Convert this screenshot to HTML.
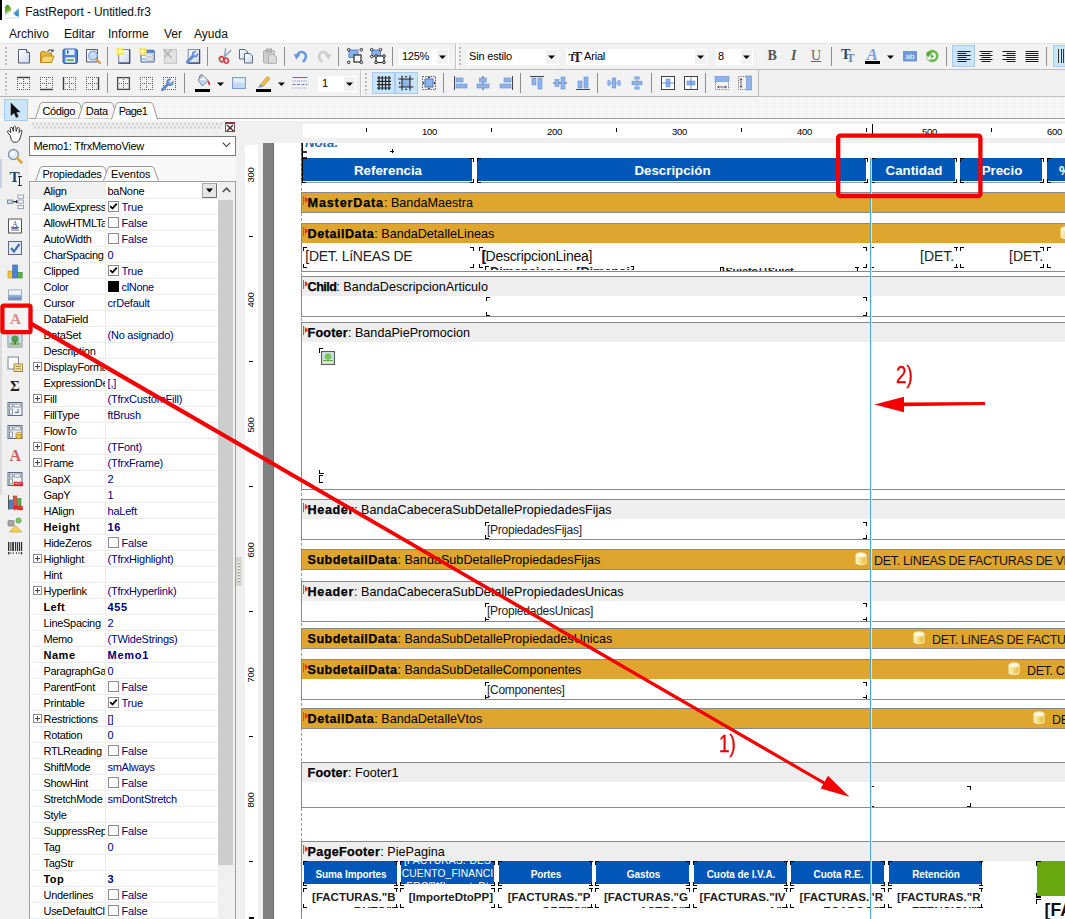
<!DOCTYPE html><html><head><meta charset="utf-8"><title>FastReport</title><style>
html,body{margin:0;padding:0;}
html{overflow:hidden;width:1065px;height:919px;}
body{width:1065px;height:919px;overflow:hidden;background:#f0f0f0;position:relative;font-family:"Liberation Sans",sans-serif;font-size:11px;color:#000;}
div{position:absolute;box-sizing:border-box;}
.t{white-space:nowrap;line-height:1;}
svg{position:absolute;overflow:visible;}
.gold{background:#dea62f;border:1px solid #8a8a8a;}
.ghead{background:#eeeeee;}
.band{border:1px solid #8a8a8a;background:#fff;}
.bt{white-space:nowrap;line-height:1;font-size:12.6px;}
.blue{background:#0057b7;color:#fff;font-weight:bold;text-align:center;white-space:nowrap;overflow:hidden;}
.pn{white-space:nowrap;line-height:1;font-size:11px;color:#000;}
.pv{white-space:nowrap;line-height:1;font-size:11px;color:#000080;}
.cb{width:11px;height:11px;border:1px solid #8a8a8a;background:#fff;}
</style></head><body><div id="root" style="left:0;top:0;width:1065px;height:919px;overflow:hidden;">
<div style="left:0px;top:0px;width:1065px;height:43px;background:#fff;"></div>
<div style="left:0px;top:0px;width:2px;height:20px;background:#000;"></div>
<svg style="left:4px;top:4px" width="16" height="15" viewBox="0 0 16 15"><defs><linearGradient id="lg1" x1="0" y1="0" x2="0.3" y2="1"><stop offset="0" stop-color="#3f8f12"/><stop offset=".55" stop-color="#6cb02a"/><stop offset="1" stop-color="#e8f2dc"/></linearGradient><linearGradient id="lg2" x1="1" y1="1" x2="0" y2="0.2"><stop offset="0" stop-color="#2a84c8"/><stop offset=".7" stop-color="#4a9cd8"/><stop offset="1" stop-color="#d8eaf6"/></linearGradient></defs><path d="M1 11.5 L1 3 Q2.5 0 4.5 1 Q7 3 7.6 6.5 Q5 7.5 3.5 9.5 Q2 11 1 11.5 Z" fill="url(#lg1)"/><path d="M9.2 9.3 L14.8 4.6 L14.8 12.8 Q11.5 12.6 9.2 9.3 Z" fill="url(#lg2)"/><path d="M0.5 14 L15 14" stroke="#d8dce4" stroke-width="1"/></svg>
<div class="t" style="left:25.3px;top:6.4px;font-size:12px;color:#111;letter-spacing:-0.101px;">FastReport - Untitled.fr3</div>
<div class="t" style="left:9px;top:27.5px;font-size:12px;color:#111;">Archivo</div>
<div class="t" style="left:64px;top:27.5px;font-size:12px;color:#111;">Editar</div>
<div class="t" style="left:108px;top:27.5px;font-size:12px;color:#111;">Informe</div>
<div class="t" style="left:164px;top:27.5px;font-size:12px;color:#111;">Ver</div>
<div class="t" style="left:194px;top:27.5px;font-size:12px;color:#111;">Ayuda</div>
<div style="left:0px;top:43px;width:1065px;height:1px;background:#e2e2e2;"></div>
<div style="left:0px;top:68.5px;width:1065px;height:1px;background:#bdbdbd;"></div>
<div style="left:0px;top:70px;width:758px;height:1px;background:#fff;"></div>
<div style="left:0px;top:96px;width:758px;height:1px;background:#b9b9b9;"></div>
<div style="left:757px;top:70px;width:1px;height:27px;background:#c8c8c8;"></div>
<div style="left:29px;top:97px;width:1036px;height:22px;background-color:#f9f9f9;background-image:radial-gradient(circle at 0.5px 0.5px,#ececec 0.6px,transparent 0.8px);background-size:2px 2px;"></div>
<div style="left:29px;top:118px;width:1036px;height:1px;background:#a0a0a0;"></div>
<div style="left:0px;top:119px;width:1065px;height:2px;background:#fcfcfc;"></div>
<div style="left:0px;top:44px;width:1065px;height:25px;background:#f2f2f2;"></div>
<div style="left:0px;top:70px;width:758px;height:26px;background:#f2f2f2;"></div>
<div style="left:5px;top:47px;width:3px;height:20px;background-image:radial-gradient(circle at 1px 1px,#bcbcbc 0.8px,transparent 1.1px);background-size:3px 4px;"></div>
<div style="left:5px;top:73px;width:3px;height:21px;background-image:radial-gradient(circle at 1px 1px,#bcbcbc 0.8px,transparent 1.1px);background-size:3px 4px;"></div>
<svg style="left:15.5px;top:48.0px" width="16" height="16" viewBox="0 0 16 16"><defs><linearGradient id="pg" x1="0" y1="0" x2="1" y2="1"><stop offset="0" stop-color="#ffffff"/><stop offset="1" stop-color="#cdd6ea"/></linearGradient></defs><path d="M2.5 1.5 L10.5 1.5 L13.5 4.5 L13.5 15 L2.5 15 Z" fill="url(#pg)" stroke="#4d5a78" stroke-width="1"/><path d="M10.5 1.5 L10.5 4.5 L13.5 4.5" fill="#fff" stroke="#4d5a78" stroke-width="1"/></svg>
<svg style="left:38.5px;top:48.0px" width="16" height="16" viewBox="0 0 16 16"><path d="M1.5 5 L1.5 14.5 L12.5 14.5 L12.5 5 L7 5 L6 3.5 L2.5 3.5 Z" fill="#f0b83a" stroke="#b98218"/><path d="M1.5 14.5 L4 8 L15 8 L12.5 14.5 Z" fill="#fbd66c" stroke="#c18a1e"/><path d="M8.5 3.5 Q11 0.5 14 3" fill="none" stroke="#555" stroke-width="1.2"/><path d="M14.8 1 L14.5 4 L11.8 3.4 Z" fill="#555"/></svg>
<svg style="left:62.0px;top:48.0px" width="16" height="16" viewBox="0 0 16 16"><rect x="1" y="1" width="14.5" height="14.5" rx="2" fill="#4f86d6" stroke="#2c5aa6"/><rect x="3.5" y="1.5" width="9" height="5.5" fill="#e6eefb"/><rect x="5" y="2.3" width="1.5" height="3.3" fill="#35508a"/><rect x="3.5" y="9.5" width="9.5" height="5" fill="#f5f8fc"/><rect x="4.5" y="11" width="7.5" height="2.2" fill="#76b85a"/></svg>
<svg style="left:85.0px;top:48.0px" width="16" height="16" viewBox="0 0 16 16"><defs><linearGradient id="pg" x1="0" y1="0" x2="1" y2="1"><stop offset="0" stop-color="#ffffff"/><stop offset="1" stop-color="#cdd6ea"/></linearGradient></defs><path d="M1.5 1.5 L12.5 1.5 L12.5 14 L1.5 14 Z" fill="url(#pg)" stroke="#4d5a78"/><circle cx="8" cy="7.5" r="4.3" fill="#c4dbf4" fill-opacity=".9" stroke="#7fa4d4" stroke-width="1.2"/><path d="M11.2 11 L15 15" stroke="#d79a4a" stroke-width="2.2" stroke-linecap="round"/></svg>
<div style="left:107px;top:47px;width:1px;height:19px;background:#8e8e8e;"></div>
<svg style="left:115.5px;top:48.0px" width="16" height="16" viewBox="0 0 16 16"><defs><linearGradient id="pg" x1="0" y1="0" x2="1" y2="1"><stop offset="0" stop-color="#ffffff"/><stop offset="1" stop-color="#cdd6ea"/></linearGradient></defs><rect x="2.7" y="1.5" width="11" height="13.6" fill="url(#pg)" stroke="#7a86a4" stroke-width="1"/><path d="M2.7 15.1 L13.7 15.1 L13.7 1.5" fill="none" stroke="#3a4662" stroke-width="1.2"/><g transform="translate(0.3,-0.3)"><rect x="0.3" y="0.3" width="6.8" height="6.8" fill="#f7dc3a"/><path d="M3.7 0 L3.7 7.4 M0 3.7 L7.4 3.7" stroke="#fffbd0" stroke-width="1.1"/><path d="M0.6 0.6 L6.8 6.8 M6.8 0.6 L0.6 6.8" stroke="#fff3a0" stroke-width=".8"/><rect x="2.9" y="2.9" width="1.6" height="1.6" fill="#ffffff"/></g></svg>
<svg style="left:139.0px;top:48.0px" width="16" height="16" viewBox="0 0 16 16"><rect x="2" y="2.4" width="13.2" height="11.6" rx="1" fill="#f4f7fc" stroke="#3f62a8" stroke-width="1.1"/><rect x="2" y="2.4" width="13.2" height="2.6" fill="#5a88d4"/><rect x="3.6" y="6.6" width="2.4" height="1" fill="#4a78c8"/><rect x="7" y="6" width="6.4" height="2.2" fill="#eceef2" stroke="#9aa2b4" stroke-width=".6"/><rect x="3.6" y="10.6" width="2.4" height="1" fill="#4a78c8"/><rect x="7" y="10" width="6.4" height="2.2" fill="#eceef2" stroke="#9aa2b4" stroke-width=".6"/><g transform="translate(0.2,-0.3)"><rect x="0.3" y="0.3" width="6.8" height="6.8" fill="#f7dc3a"/><path d="M3.7 0 L3.7 7.4 M0 3.7 L7.4 3.7" stroke="#fffbd0" stroke-width="1.1"/><path d="M0.6 0.6 L6.8 6.8 M6.8 0.6 L0.6 6.8" stroke="#fff3a0" stroke-width=".8"/><rect x="2.9" y="2.9" width="1.6" height="1.6" fill="#ffffff"/></g></svg>
<svg style="left:162.0px;top:48.0px" width="16" height="16" viewBox="0 0 16 16"><rect x="2.4" y="1.5" width="12" height="13.8" fill="#e2e2e2" stroke="#c4c4c4"/><path d="M1.5 1 L9.5 10 M9.5 1.5 L3 9" stroke="#b0b0b0" stroke-width="1.3"/></svg>
<svg style="left:184.5px;top:48.0px" width="16" height="16" viewBox="0 0 16 16"><defs><linearGradient id="pg" x1="0" y1="0" x2="1" y2="1"><stop offset="0" stop-color="#ffffff"/><stop offset="1" stop-color="#cdd6ea"/></linearGradient></defs><rect x="3.2" y="1.5" width="11.4" height="13.6" fill="url(#pg)" stroke="#7a86a4"/><path d="M3.2 15.1 L14.6 15.1 L14.6 1.5" fill="none" stroke="#3a4662" stroke-width="1.2"/><path d="M2.2 14 L8.5 7.6" stroke="#5f8ed8" stroke-width="3" stroke-linecap="round"/><circle cx="10" cy="6.2" r="2.9" fill="#86aee4" stroke="#5580c4" stroke-width=".8"/><path d="M10 6.2 L12.8 3.6" stroke="#e8ecf6" stroke-width="2"/></svg>
<div style="left:207px;top:47px;width:1px;height:19px;background:#8e8e8e;"></div>
<svg style="left:216.0px;top:48.0px" width="16" height="16" viewBox="0 0 16 16"><path d="M9.6 0.8 L8.2 9.5 M14.6 2.6 L7.6 9.6" stroke="#8fa6c4" stroke-width="1.5" stroke-linecap="round"/><ellipse cx="5.6" cy="11.2" rx="2.1" ry="2.6" transform="rotate(-20 5.6 11.2)" fill="none" stroke="#d63a3a" stroke-width="1.6"/><ellipse cx="10.2" cy="12.6" rx="2.1" ry="2.6" transform="rotate(-20 10.2 12.6)" fill="none" stroke="#d63a3a" stroke-width="1.6"/></svg>
<svg style="left:238.0px;top:48.0px" width="16" height="16" viewBox="0 0 16 16"><defs><linearGradient id="pg" x1="0" y1="0" x2="1" y2="1"><stop offset="0" stop-color="#ffffff"/><stop offset="1" stop-color="#cdd6ea"/></linearGradient></defs><path d="M1.5 1.5 L7 1.5 L9.5 4 L9.5 11 L1.5 11 Z" fill="url(#pg)" stroke="#5a6a8c"/><path d="M6.5 5.5 L12 5.5 L14.5 8 L14.5 15 L6.5 15 Z" fill="url(#pg)" stroke="#5a6a8c"/></svg>
<svg style="left:261.5px;top:48.0px" width="16" height="16" viewBox="0 0 16 16"><rect x="1.5" y="2.5" width="11" height="12.5" rx="1" fill="#cfcfcf" stroke="#adadad"/><rect x="4.5" y="1" width="5" height="3" fill="#c0c0c0" stroke="#a8a8a8"/><path d="M6.5 6.5 L12 6.5 L14.5 9 L14.5 15.3 L6.5 15.3 Z" fill="#dcdcdc" stroke="#b0b0b0"/></svg>
<div style="left:284px;top:47px;width:1px;height:19px;background:#8e8e8e;"></div>
<svg style="left:292.5px;top:48.0px" width="16" height="16" viewBox="0 0 16 16"><path d="M4 9 Q5 3 10 4.2 Q14.5 6 12 11.5 L10 14" fill="none" stroke="#6a98e0" stroke-width="2.6"/><path d="M0.8 6 L7.5 6.6 L3.2 11.5 Z" fill="#6a98e0"/></svg>
<svg style="left:316.0px;top:48.0px" width="16" height="16" viewBox="0 0 16 16"><path d="M12 9 Q11 3 6 4.2 Q1.5 6 4 11.5 L6 14" fill="none" stroke="#cdcdcd" stroke-width="2.6"/><path d="M15.2 6 L8.5 6.6 L12.8 11.5 Z" fill="#cdcdcd"/></svg>
<div style="left:338px;top:47px;width:1px;height:19px;background:#8e8e8e;"></div>
<svg style="left:347.0px;top:48.0px" width="16" height="16" viewBox="0 0 16 16"><rect x="2" y="2" width="9" height="7.5" fill="#8ab0ea" stroke="#5a84cc"/><rect x="7" y="7" width="7" height="7" fill="#fff" stroke="#2a2a2a" stroke-width="1.2"/><circle cx="1.7" cy="1.7" r="1.3" fill="#fff" stroke="#222" stroke-width="1"/><circle cx="14.3" cy="1.7" r="1.3" fill="#fff" stroke="#222" stroke-width="1"/><circle cx="1.7" cy="14.3" r="1.3" fill="#fff" stroke="#222" stroke-width="1"/><circle cx="14.3" cy="14.3" r="1.3" fill="#fff" stroke="#222" stroke-width="1"/></svg>
<svg style="left:370.0px;top:48.0px" width="16" height="16" viewBox="0 0 16 16"><rect x="2" y="2" width="8.5" height="6.5" fill="#8ab0ea" stroke="#5a84cc"/><rect x="6" y="8" width="8" height="6.5" fill="#fff" stroke="#2a2a2a" stroke-width="1.2"/><circle cx="1.7" cy="1.7" r="1.3" fill="#fff" stroke="#222" stroke-width="1"/><circle cx="10.5" cy="1.7" r="1.3" fill="#fff" stroke="#222" stroke-width="1"/><circle cx="1.7" cy="8.5" r="1.3" fill="#fff" stroke="#222" stroke-width="1"/><circle cx="6" cy="8" r="1.3" fill="#fff" stroke="#222" stroke-width="1"/><circle cx="14" cy="8" r="1.3" fill="#fff" stroke="#222" stroke-width="1"/><circle cx="6" cy="14.3" r="1.3" fill="#fff" stroke="#222" stroke-width="1"/><circle cx="14" cy="14.3" r="1.3" fill="#fff" stroke="#222" stroke-width="1"/></svg>
<div style="left:392px;top:47px;width:1px;height:19px;background:#8e8e8e;"></div>
<div style="left:399px;top:48.5px;width:50px;height:16.0px;background:#fff;"></div>
<div style="left:437px;top:49.5px;width:11px;height:14.0px;background:#f1f1f1;"></div>
<div class="t" style="left:402px;top:51.0px;font-size:11px;letter-spacing:-0.281px;">125%</div>
<svg style="left:439.0px;top:55.0px" width="7" height="4" viewBox="0 0 7 4"><path d="M0 0.5 L7 0.5 L3.5 4 Z" fill="#000"/></svg>
<div style="left:455px;top:44px;width:1px;height:25px;background:#c4c4c4;"></div>
<div style="left:456px;top:44px;width:1px;height:25px;background:#fff;"></div>
<div style="left:459px;top:47px;width:3px;height:20px;background-image:radial-gradient(circle at 1px 1px,#bcbcbc 0.8px,transparent 1.1px);background-size:3px 4px;"></div>
<div style="left:467px;top:48.5px;width:91px;height:16.0px;background:#fff;"></div>
<div style="left:546px;top:49.5px;width:11px;height:14.0px;background:#f1f1f1;"></div>
<div class="t" style="left:469px;top:51.0px;font-size:11px;letter-spacing:-0.179px;">Sin estilo</div>
<svg style="left:548.0px;top:55.0px" width="7" height="4" viewBox="0 0 7 4"><path d="M0 0.5 L7 0.5 L3.5 4 Z" fill="#000"/></svg>
<div style="left:566px;top:48.5px;width:141px;height:16.0px;background:#fff;"></div>
<div style="left:695px;top:49.5px;width:11px;height:14.0px;background:#f1f1f1;"></div>
<div class="t" style="left:584px;top:51.0px;font-size:11px;letter-spacing:-0.176px;">Arial</div>
<svg style="left:697.0px;top:55.0px" width="7" height="4" viewBox="0 0 7 4"><path d="M0 0.5 L7 0.5 L3.5 4 Z" fill="#000"/></svg>
<div class="t" style="left:568.5px;top:49.5px;font-family:'Liberation Serif',serif;font-weight:bold;font-size:11px;color:#222;letter-spacing:-3px;">T<span style="font-size:14px;position:relative;top:1px;">T</span></div>
<div style="left:715.5px;top:48.5px;width:37.0px;height:16.0px;background:#fff;"></div>
<div style="left:740.5px;top:49.5px;width:11px;height:14.0px;background:#f1f1f1;"></div>
<div class="t" style="left:718px;top:51.0px;font-size:11px;letter-spacing:-0.245px;">8</div>
<svg style="left:742.5px;top:55.0px" width="7" height="4" viewBox="0 0 7 4"><path d="M0 0.5 L7 0.5 L3.5 4 Z" fill="#000"/></svg>
<div class="t" style="left:767.5px;top:49px;font-family:'Liberation Serif',serif;font-weight:bold;font-size:14px;color:#555;">B</div>
<div class="t" style="left:791px;top:49px;font-family:'Liberation Serif',serif;font-style:italic;font-weight:bold;font-size:14px;color:#555;">I</div>
<div class="t" style="left:811px;top:49px;font-family:'Liberation Serif',serif;font-size:14px;color:#666;text-decoration:underline;">U</div>
<div style="left:831px;top:47px;width:1px;height:19px;background:#8e8e8e;"></div>
<div class="t" style="left:841px;top:48px;font-family:'Liberation Serif',serif;font-weight:bold;font-size:14px;color:#2f4668;letter-spacing:-3.5px;">T<span style="font-size:11.5px;color:#6a86b0;position:relative;top:2.5px;">T</span></div>
<div class="t" style="left:866.5px;top:45.5px;font-family:'Liberation Serif',serif;font-style:italic;font-weight:bold;font-size:17px;color:#7aa0e0;">A</div>
<div style="left:865px;top:61px;width:15px;height:3px;background:#000;"></div>
<svg style="left:887.0px;top:55.0px" width="7" height="4" viewBox="0 0 7 4"><path d="M0 0.5 L7 0.5 L3.5 4 Z" fill="#000"/></svg>
<svg style="left:901.5px;top:48.0px" width="16" height="16" viewBox="0 0 16 16"><rect x="1" y="3" width="14" height="10.5" fill="#6f98dc"/><text x="8" y="11.2" font-family="Liberation Sans" font-size="8" fill="#fff" text-anchor="middle">ab</text></svg>
<svg style="left:924.0px;top:48.0px" width="16" height="16" viewBox="0 0 16 16"><circle cx="8.3" cy="8" r="4.9" fill="none" stroke="#6cbc4c" stroke-width="2.6"/><path d="M2 8.5 L6.5 8.5 L5.5 13 Z" fill="#f2f2f2"/><path d="M2.2 4 L8.6 4.4 L4.4 9 Z" fill="#5aaa3a"/><path d="M7 10.2 L10 8.2 L7 6.4 Z" fill="#4a9a2e"/></svg>
<div style="left:946px;top:47px;width:1px;height:19px;background:#8e8e8e;"></div>
<div style="left:952px;top:44.5px;width:23px;height:22.5px;background:#cce4f7;border:1px solid #a6cdf0;"></div>
<svg style="left:956.0px;top:48.0px" width="16" height="16" viewBox="0 0 16 16"><rect x="1.5" y="3" width="13" height="1" fill="#1a1a1a"/><rect x="1.5" y="5" width="9" height="1" fill="#1a1a1a"/><rect x="1.5" y="7" width="13" height="1" fill="#1a1a1a"/><rect x="1.5" y="9" width="9" height="1" fill="#1a1a1a"/><rect x="1.5" y="11" width="13" height="1" fill="#1a1a1a"/><rect x="1.5" y="13" width="9" height="1" fill="#1a1a1a"/></svg>
<svg style="left:978.0px;top:48.0px" width="16" height="16" viewBox="0 0 16 16"><rect x="1.5" y="3" width="13" height="1" fill="#1a1a1a"/><rect x="3.5" y="5" width="9" height="1" fill="#1a1a1a"/><rect x="1.5" y="7" width="13" height="1" fill="#1a1a1a"/><rect x="3.5" y="9" width="9" height="1" fill="#1a1a1a"/><rect x="1.5" y="11" width="13" height="1" fill="#1a1a1a"/><rect x="3.5" y="13" width="9" height="1" fill="#1a1a1a"/></svg>
<svg style="left:1001.0px;top:48.0px" width="16" height="16" viewBox="0 0 16 16"><rect x="1.5" y="3" width="13" height="1" fill="#1a1a1a"/><rect x="5.5" y="5" width="9" height="1" fill="#1a1a1a"/><rect x="1.5" y="7" width="13" height="1" fill="#1a1a1a"/><rect x="5.5" y="9" width="9" height="1" fill="#1a1a1a"/><rect x="1.5" y="11" width="13" height="1" fill="#1a1a1a"/><rect x="5.5" y="13" width="9" height="1" fill="#1a1a1a"/></svg>
<svg style="left:1024.0px;top:48.0px" width="16" height="16" viewBox="0 0 16 16"><rect x="1.5" y="3" width="13" height="1" fill="#1a1a1a"/><rect x="1.5" y="5" width="13" height="1" fill="#1a1a1a"/><rect x="1.5" y="7" width="13" height="1" fill="#1a1a1a"/><rect x="1.5" y="9" width="13" height="1" fill="#1a1a1a"/><rect x="1.5" y="11" width="13" height="1" fill="#1a1a1a"/><rect x="1.5" y="13" width="13" height="1" fill="#1a1a1a"/></svg>
<div style="left:1046px;top:47px;width:1px;height:19px;background:#8e8e8e;"></div>
<div style="left:1052.5px;top:44.5px;width:23px;height:22.5px;background:#cce4f7;border:1px solid #a6cdf0;"></div>
<div style="left:1058px;top:49px;width:1.2px;height:14px;background:#333;"></div>
<div style="left:1060.5px;top:49px;width:1.2px;height:14px;background:#333;"></div>
<div style="left:1063px;top:49px;width:1.2px;height:14px;background:#333;"></div>
<svg style="left:16.0px;top:76.0px" width="16" height="16" viewBox="0 0 16 16"><g fill="#5a5a5a"><rect x="1" y="1" width="1" height="1"/><rect x="1" y="3" width="1" height="1"/><rect x="1" y="5" width="1" height="1"/><rect x="1" y="7" width="1" height="1"/><rect x="1" y="9" width="1" height="1"/><rect x="1" y="11" width="1" height="1"/><rect x="1" y="13" width="1" height="1"/><rect x="3" y="1" width="1" height="1"/><rect x="3" y="7" width="1" height="1"/><rect x="3" y="13" width="1" height="1"/><rect x="5" y="1" width="1" height="1"/><rect x="5" y="7" width="1" height="1"/><rect x="5" y="13" width="1" height="1"/><rect x="7" y="1" width="1" height="1"/><rect x="7" y="3" width="1" height="1"/><rect x="7" y="5" width="1" height="1"/><rect x="7" y="7" width="1" height="1"/><rect x="7" y="9" width="1" height="1"/><rect x="7" y="11" width="1" height="1"/><rect x="7" y="13" width="1" height="1"/><rect x="9" y="1" width="1" height="1"/><rect x="9" y="7" width="1" height="1"/><rect x="9" y="13" width="1" height="1"/><rect x="11" y="1" width="1" height="1"/><rect x="11" y="7" width="1" height="1"/><rect x="11" y="13" width="1" height="1"/><rect x="13" y="1" width="1" height="1"/><rect x="13" y="3" width="1" height="1"/><rect x="13" y="5" width="1" height="1"/><rect x="13" y="7" width="1" height="1"/><rect x="13" y="9" width="1" height="1"/><rect x="13" y="11" width="1" height="1"/><rect x="13" y="13" width="1" height="1"/></g><g fill="#3c3c3c"><rect x="1" y="0.8" width="13" height="1.4"/></g></svg>
<svg style="left:39.0px;top:76.0px" width="16" height="16" viewBox="0 0 16 16"><g fill="#5a5a5a"><rect x="1" y="1" width="1" height="1"/><rect x="1" y="3" width="1" height="1"/><rect x="1" y="5" width="1" height="1"/><rect x="1" y="7" width="1" height="1"/><rect x="1" y="9" width="1" height="1"/><rect x="1" y="11" width="1" height="1"/><rect x="1" y="13" width="1" height="1"/><rect x="3" y="1" width="1" height="1"/><rect x="3" y="7" width="1" height="1"/><rect x="3" y="13" width="1" height="1"/><rect x="5" y="1" width="1" height="1"/><rect x="5" y="7" width="1" height="1"/><rect x="5" y="13" width="1" height="1"/><rect x="7" y="1" width="1" height="1"/><rect x="7" y="3" width="1" height="1"/><rect x="7" y="5" width="1" height="1"/><rect x="7" y="7" width="1" height="1"/><rect x="7" y="9" width="1" height="1"/><rect x="7" y="11" width="1" height="1"/><rect x="7" y="13" width="1" height="1"/><rect x="9" y="1" width="1" height="1"/><rect x="9" y="7" width="1" height="1"/><rect x="9" y="13" width="1" height="1"/><rect x="11" y="1" width="1" height="1"/><rect x="11" y="7" width="1" height="1"/><rect x="11" y="13" width="1" height="1"/><rect x="13" y="1" width="1" height="1"/><rect x="13" y="3" width="1" height="1"/><rect x="13" y="5" width="1" height="1"/><rect x="13" y="7" width="1" height="1"/><rect x="13" y="9" width="1" height="1"/><rect x="13" y="11" width="1" height="1"/><rect x="13" y="13" width="1" height="1"/></g><g fill="#3c3c3c"><rect x="1" y="12.8" width="13" height="1.4"/></g></svg>
<svg style="left:62.0px;top:76.0px" width="16" height="16" viewBox="0 0 16 16"><g fill="#5a5a5a"><rect x="1" y="1" width="1" height="1"/><rect x="1" y="3" width="1" height="1"/><rect x="1" y="5" width="1" height="1"/><rect x="1" y="7" width="1" height="1"/><rect x="1" y="9" width="1" height="1"/><rect x="1" y="11" width="1" height="1"/><rect x="1" y="13" width="1" height="1"/><rect x="3" y="1" width="1" height="1"/><rect x="3" y="7" width="1" height="1"/><rect x="3" y="13" width="1" height="1"/><rect x="5" y="1" width="1" height="1"/><rect x="5" y="7" width="1" height="1"/><rect x="5" y="13" width="1" height="1"/><rect x="7" y="1" width="1" height="1"/><rect x="7" y="3" width="1" height="1"/><rect x="7" y="5" width="1" height="1"/><rect x="7" y="7" width="1" height="1"/><rect x="7" y="9" width="1" height="1"/><rect x="7" y="11" width="1" height="1"/><rect x="7" y="13" width="1" height="1"/><rect x="9" y="1" width="1" height="1"/><rect x="9" y="7" width="1" height="1"/><rect x="9" y="13" width="1" height="1"/><rect x="11" y="1" width="1" height="1"/><rect x="11" y="7" width="1" height="1"/><rect x="11" y="13" width="1" height="1"/><rect x="13" y="1" width="1" height="1"/><rect x="13" y="3" width="1" height="1"/><rect x="13" y="5" width="1" height="1"/><rect x="13" y="7" width="1" height="1"/><rect x="13" y="9" width="1" height="1"/><rect x="13" y="11" width="1" height="1"/><rect x="13" y="13" width="1" height="1"/></g><g fill="#3c3c3c"><rect x="0.8" y="1" width="1.4" height="13"/></g></svg>
<svg style="left:85.0px;top:76.0px" width="16" height="16" viewBox="0 0 16 16"><g fill="#5a5a5a"><rect x="1" y="1" width="1" height="1"/><rect x="1" y="3" width="1" height="1"/><rect x="1" y="5" width="1" height="1"/><rect x="1" y="7" width="1" height="1"/><rect x="1" y="9" width="1" height="1"/><rect x="1" y="11" width="1" height="1"/><rect x="1" y="13" width="1" height="1"/><rect x="3" y="1" width="1" height="1"/><rect x="3" y="7" width="1" height="1"/><rect x="3" y="13" width="1" height="1"/><rect x="5" y="1" width="1" height="1"/><rect x="5" y="7" width="1" height="1"/><rect x="5" y="13" width="1" height="1"/><rect x="7" y="1" width="1" height="1"/><rect x="7" y="3" width="1" height="1"/><rect x="7" y="5" width="1" height="1"/><rect x="7" y="7" width="1" height="1"/><rect x="7" y="9" width="1" height="1"/><rect x="7" y="11" width="1" height="1"/><rect x="7" y="13" width="1" height="1"/><rect x="9" y="1" width="1" height="1"/><rect x="9" y="7" width="1" height="1"/><rect x="9" y="13" width="1" height="1"/><rect x="11" y="1" width="1" height="1"/><rect x="11" y="7" width="1" height="1"/><rect x="11" y="13" width="1" height="1"/><rect x="13" y="1" width="1" height="1"/><rect x="13" y="3" width="1" height="1"/><rect x="13" y="5" width="1" height="1"/><rect x="13" y="7" width="1" height="1"/><rect x="13" y="9" width="1" height="1"/><rect x="13" y="11" width="1" height="1"/><rect x="13" y="13" width="1" height="1"/></g><g fill="#3c3c3c"><rect x="12.8" y="1" width="1.4" height="13"/></g></svg>
<div style="left:107px;top:73px;width:1px;height:20px;background:#8e8e8e;"></div>
<svg style="left:116.0px;top:76.0px" width="16" height="16" viewBox="0 0 16 16"><rect x="1.6" y="1.6" width="11.8" height="11.8" fill="none" stroke="#4a4a4a" stroke-width="1.3"/><g fill="#5a5a5a"><rect x="1" y="7" width="1" height="1"/><rect x="3" y="7" width="1" height="1"/><rect x="5" y="7" width="1" height="1"/><rect x="7" y="1" width="1" height="1"/><rect x="7" y="3" width="1" height="1"/><rect x="7" y="5" width="1" height="1"/><rect x="7" y="7" width="1" height="1"/><rect x="7" y="9" width="1" height="1"/><rect x="7" y="11" width="1" height="1"/><rect x="7" y="13" width="1" height="1"/><rect x="9" y="7" width="1" height="1"/><rect x="11" y="7" width="1" height="1"/><rect x="13" y="7" width="1" height="1"/></g><g fill="#3c3c3c"></g></svg>
<svg style="left:139.0px;top:76.0px" width="16" height="16" viewBox="0 0 16 16"><g fill="#5a5a5a"><rect x="1" y="1" width="1" height="1"/><rect x="1" y="3" width="1" height="1"/><rect x="1" y="5" width="1" height="1"/><rect x="1" y="7" width="1" height="1"/><rect x="1" y="9" width="1" height="1"/><rect x="1" y="11" width="1" height="1"/><rect x="1" y="13" width="1" height="1"/><rect x="3" y="1" width="1" height="1"/><rect x="3" y="7" width="1" height="1"/><rect x="3" y="13" width="1" height="1"/><rect x="5" y="1" width="1" height="1"/><rect x="5" y="7" width="1" height="1"/><rect x="5" y="13" width="1" height="1"/><rect x="7" y="1" width="1" height="1"/><rect x="7" y="3" width="1" height="1"/><rect x="7" y="5" width="1" height="1"/><rect x="7" y="7" width="1" height="1"/><rect x="7" y="9" width="1" height="1"/><rect x="7" y="11" width="1" height="1"/><rect x="7" y="13" width="1" height="1"/><rect x="9" y="1" width="1" height="1"/><rect x="9" y="7" width="1" height="1"/><rect x="9" y="13" width="1" height="1"/><rect x="11" y="1" width="1" height="1"/><rect x="11" y="7" width="1" height="1"/><rect x="11" y="13" width="1" height="1"/><rect x="13" y="1" width="1" height="1"/><rect x="13" y="3" width="1" height="1"/><rect x="13" y="5" width="1" height="1"/><rect x="13" y="7" width="1" height="1"/><rect x="13" y="9" width="1" height="1"/><rect x="13" y="11" width="1" height="1"/><rect x="13" y="13" width="1" height="1"/></g><g fill="#3c3c3c"></g></svg>
<svg style="left:162.0px;top:76.0px" width="16" height="16" viewBox="0 0 16 16"><g fill="#5a5a5a"><rect x="1" y="1" width="1" height="1"/><rect x="1" y="3" width="1" height="1"/><rect x="1" y="5" width="1" height="1"/><rect x="1" y="7" width="1" height="1"/><rect x="1" y="9" width="1" height="1"/><rect x="1" y="11" width="1" height="1"/><rect x="1" y="13" width="1" height="1"/><rect x="3" y="1" width="1" height="1"/><rect x="3" y="13" width="1" height="1"/><rect x="5" y="1" width="1" height="1"/><rect x="5" y="13" width="1" height="1"/><rect x="7" y="1" width="1" height="1"/><rect x="7" y="13" width="1" height="1"/><rect x="9" y="1" width="1" height="1"/><rect x="9" y="13" width="1" height="1"/><rect x="11" y="1" width="1" height="1"/><rect x="11" y="13" width="1" height="1"/><rect x="13" y="1" width="1" height="1"/><rect x="13" y="3" width="1" height="1"/><rect x="13" y="5" width="1" height="1"/><rect x="13" y="7" width="1" height="1"/><rect x="13" y="9" width="1" height="1"/><rect x="13" y="11" width="1" height="1"/><rect x="13" y="13" width="1" height="1"/></g><g fill="#3c3c3c"></g><g transform="translate(-1.5,0.5) scale(0.95)"><path d="M2 14 L8 8" stroke="#5a86c8" stroke-width="3" stroke-linecap="round"/><circle cx="10" cy="6" r="3.4" fill="#7aa4dc" stroke="#4a74b4"/><path d="M10 6 L13.5 2.5" stroke="#f4f4f4" stroke-width="2.4"/></g></svg>
<div style="left:184px;top:73px;width:1px;height:20px;background:#8e8e8e;"></div>
<svg style="left:194.0px;top:74.0px" width="18" height="16" viewBox="0 0 18 16"><path d="M4 6 L9 1.5 L14 6.5 L8.5 12 Z" fill="#eef4fb" stroke="#6a7a94"/><path d="M5 6 L13 6.3 L8.5 11 Z" fill="#bcd2ee"/><path d="M13.5 6 Q17 8 15.5 12 Q13 9 13.5 6 Z" fill="#e03030"/><path d="M9 1.5 Q6 -1 5.5 4" fill="none" stroke="#666"/></svg>
<div style="left:195px;top:89px;width:15px;height:3px;background:#000;"></div>
<svg style="left:217.0px;top:82.0px" width="7" height="4" viewBox="0 0 7 4"><path d="M0 0.5 L7 0.5 L3.5 4 Z" fill="#000"/></svg>
<svg style="left:231.0px;top:75.0px" width="16" height="16" viewBox="0 0 16 16"><rect x="1.5" y="2.5" width="13" height="11" fill="#c4d8f4" stroke="#7a9cd8"/><rect x="2.5" y="3.5" width="11" height="4" fill="#e4eefb"/></svg>
<svg style="left:255.5px;top:74.0px" width="16" height="16" viewBox="0 0 16 16"><path d="M4 11 L11.5 2.5 L14 4.5 L7 12.5 Z" fill="#f0c04a" stroke="#b88a2a" stroke-width=".8"/><path d="M2 14 L4 10.5 L7.5 12.8 Z" fill="#7a9acc"/></svg>
<div style="left:256px;top:89px;width:15px;height:3px;background:#000;"></div>
<svg style="left:277.5px;top:82.0px" width="7" height="4" viewBox="0 0 7 4"><path d="M0 0.5 L7 0.5 L3.5 4 Z" fill="#000"/></svg>
<svg style="left:291.5px;top:75.0px" width="16" height="16" viewBox="0 0 16 16"><g stroke="#5a78b0"><path d="M0.5 2.5 L15.5 2.5"/><path d="M0.5 6 L15.5 6" stroke-dasharray="1 1.2"/><path d="M0.5 9.5 L15.5 9.5" stroke-dasharray="3 1.5"/><path d="M0.5 13 L15.5 13" stroke-dasharray="1 2"/></g></svg>
<div style="left:318px;top:75.5px;width:37.5px;height:16.0px;background:#fff;"></div>
<div style="left:343.5px;top:76.5px;width:11px;height:14.0px;background:#f1f1f1;"></div>
<div class="t" style="left:322px;top:78.0px;font-size:11px;letter-spacing:-0.245px;">1</div>
<svg style="left:345.5px;top:82.0px" width="7" height="4" viewBox="0 0 7 4"><path d="M0 0.5 L7 0.5 L3.5 4 Z" fill="#000"/></svg>
<div style="left:360px;top:70px;width:1px;height:26px;background:#c4c4c4;"></div>
<div style="left:361px;top:70px;width:1px;height:26px;background:#fff;"></div>
<div style="left:365px;top:73px;width:3px;height:21px;background-image:radial-gradient(circle at 1px 1px,#bcbcbc 0.8px,transparent 1.1px);background-size:3px 4px;"></div>
<div style="left:372px;top:71.5px;width:23px;height:22.5px;background:#cce4f7;border:1px solid #a6cdf0;"></div>
<div style="left:394.5px;top:71.5px;width:23px;height:22.5px;background:#cce4f7;border:1px solid #a6cdf0;"></div>
<svg style="left:375.5px;top:75.0px" width="16" height="16" viewBox="0 0 16 16"><g stroke="#222" stroke-width="1.2"><path d="M1 3 L15 3 M1 6.3 L15 6.3 M1 9.6 L15 9.6 M1 13 L15 13 M3 1 L3 15 M6.3 1 L6.3 15 M9.6 1 L9.6 15 M13 1 L13 15"/></g></svg>
<svg style="left:398.0px;top:75.0px" width="16" height="16" viewBox="0 0 16 16"><rect x="4" y="4" width="8" height="8" fill="#8fb4ea"/><g stroke="#222" stroke-width="1.1"><path d="M0.5 4 L15.5 4 M0.5 12 L15.5 12 M4 0.5 L4 15.5 M12 0.5 L12 15.5"/></g><path d="M6.5 1 L9.5 1 L8 3 Z M6.5 15 L9.5 15 L8 13 Z M1 6.5 L1 9.5 L3 8 Z" fill="#444"/></svg>
<svg style="left:421.0px;top:75.0px" width="16" height="16" viewBox="0 0 16 16"><rect x="4" y="4" width="8" height="8" fill="#8fb4ea" stroke="#4a74b8"/><g stroke="#555" stroke-width="1" stroke-dasharray="1.5 1.2"><path d="M1.5 1.5 L14.5 1.5 L14.5 14.5 L1.5 14.5 Z" fill="none"/></g><path d="M6.5 2 L9.5 2 L8 3.6 Z M6.5 14 L9.5 14 L8 12.4 Z M2 6.5 L2 9.5 L3.6 8 Z M14 6.5 L14 9.5 L12.4 8 Z" fill="#333"/></svg>
<div style="left:443px;top:73px;width:1px;height:20px;background:#8e8e8e;"></div>
<svg style="left:452.5px;top:75.0px" width="16" height="16" viewBox="0 0 16 16"><path d="M1.5 1 L1.5 15" stroke="#444"/><rect x="3" y="3" width="7" height="4" fill="#8fb4ea" stroke="#5f8fd8" stroke-width=".6"/><rect x="3" y="9" width="11" height="4" fill="#8fb4ea" stroke="#5f8fd8" stroke-width=".6"/></svg>
<svg style="left:475.0px;top:75.0px" width="16" height="16" viewBox="0 0 16 16"><path d="M8 1 L8 15" stroke="#444"/><rect x="4.5" y="3" width="7" height="4" fill="#8fb4ea" stroke="#5f8fd8" stroke-width=".6"/><rect x="2" y="9" width="12" height="4" fill="#8fb4ea" stroke="#5f8fd8" stroke-width=".6"/></svg>
<svg style="left:497.5px;top:75.0px" width="16" height="16" viewBox="0 0 16 16"><path d="M14.5 1 L14.5 15" stroke="#444"/><rect x="6" y="3" width="7" height="4" fill="#8fb4ea" stroke="#5f8fd8" stroke-width=".6"/><rect x="2" y="9" width="11" height="4" fill="#8fb4ea" stroke="#5f8fd8" stroke-width=".6"/></svg>
<div style="left:520px;top:73px;width:1px;height:20px;background:#8e8e8e;"></div>
<svg style="left:528.5px;top:75.0px" width="16" height="16" viewBox="0 0 16 16"><path d="M1 1.5 L15 1.5" stroke="#444"/><rect x="3" y="3" width="4" height="7" fill="#8fb4ea" stroke="#5f8fd8" stroke-width=".6"/><rect x="9" y="3" width="4" height="11" fill="#8fb4ea" stroke="#5f8fd8" stroke-width=".6"/></svg>
<svg style="left:551.5px;top:75.0px" width="16" height="16" viewBox="0 0 16 16"><path d="M1 8 L15 8" stroke="#444"/><rect x="3" y="4.5" width="4" height="7" fill="#8fb4ea" stroke="#5f8fd8" stroke-width=".6"/><rect x="9" y="2" width="4" height="12" fill="#8fb4ea" stroke="#5f8fd8" stroke-width=".6"/></svg>
<svg style="left:574.5px;top:75.0px" width="16" height="16" viewBox="0 0 16 16"><path d="M1 14.5 L15 14.5" stroke="#444"/><rect x="3" y="6" width="4" height="7" fill="#8fb4ea" stroke="#5f8fd8" stroke-width=".6"/><rect x="9" y="2" width="4" height="11" fill="#8fb4ea" stroke="#5f8fd8" stroke-width=".6"/></svg>
<div style="left:597px;top:73px;width:1px;height:20px;background:#8e8e8e;"></div>
<svg style="left:605.5px;top:75.0px" width="16" height="16" viewBox="0 0 16 16"><path d="M1 8 L15 8" stroke="#5f8fd8"/><rect x="1.5" y="5" width="3" height="6" fill="#8fb4ea"/><rect x="6.2" y="3" width="3.6" height="10" fill="#8fb4ea" stroke="#5f8fd8" stroke-width=".6"/><rect x="11.5" y="5" width="3" height="6" fill="#8fb4ea"/></svg>
<svg style="left:628.5px;top:75.0px" width="16" height="16" viewBox="0 0 16 16"><path d="M8 1 L8 15" stroke="#5f8fd8"/><rect x="5" y="1.5" width="6" height="3" fill="#8fb4ea"/><rect x="3" y="6.2" width="10" height="3.6" fill="#8fb4ea" stroke="#5f8fd8" stroke-width=".6"/><rect x="5" y="11.5" width="6" height="3" fill="#8fb4ea"/></svg>
<div style="left:651px;top:73px;width:1px;height:20px;background:#8e8e8e;"></div>
<svg style="left:660.0px;top:75.0px" width="16" height="16" viewBox="0 0 16 16"><rect x="1.5" y="1.5" width="13" height="13" fill="#fff" stroke="#444"/><rect x="6" y="4" width="4" height="8" fill="#8fb4ea" stroke="#5f8fd8" stroke-width=".6"/><path d="M2 8 L14 8" stroke="#5f8fd8"/></svg>
<svg style="left:683.0px;top:75.0px" width="16" height="16" viewBox="0 0 16 16"><rect x="1.5" y="1.5" width="13" height="13" fill="#fff" stroke="#444"/><rect x="4" y="6" width="8" height="4" fill="#8fb4ea" stroke="#5f8fd8" stroke-width=".6"/><path d="M8 2 L8 14" stroke="#5f8fd8"/></svg>
<div style="left:705px;top:73px;width:1px;height:20px;background:#8e8e8e;"></div>
<svg style="left:713.5px;top:75.0px" width="16" height="16" viewBox="0 0 16 16"><rect x="1" y="1.5" width="14" height="5" fill="#8fb4ea" stroke="#5f8fd8" stroke-width=".6"/><g stroke="#666" stroke-dasharray="1 1.2" fill="none"><path d="M1.5 7 L1.5 14.5 L14.5 14.5 L14.5 7"/></g><path d="M4 12 L12 12" stroke="#666"/><path d="M3 12 L5 10.5 L5 13.5 Z M13 12 L11 10.5 L11 13.5 Z" fill="#555"/></svg>
<svg style="left:737.0px;top:75.0px" width="16" height="16" viewBox="0 0 16 16"><rect x="9.5" y="1" width="5" height="14" fill="#8fb4ea" stroke="#5f8fd8" stroke-width=".6"/><g stroke="#666" stroke-dasharray="1 1.2" fill="none"><path d="M9 1.5 L1.5 1.5 L1.5 14.5 L9 14.5"/></g><path d="M4 4 L4 12" stroke="#666"/><path d="M4 3 L2.5 5 L5.5 5 Z M4 13 L2.5 11 L5.5 11 Z" fill="#555"/></svg>
<div style="left:757.5px;top:70px;width:1px;height:27px;background:#bdbdbd;"></div>
<div style="left:0px;top:96px;width:1065px;height:1px;background:#c4c4c4;"></div>
<div style="left:0px;top:96px;width:758px;height:1px;background:#b4b4b4;"></div>
<div style="left:0px;top:159px;width:1.6px;height:29px;background:#cbd3e2;"></div>
<div style="left:0px;top:325px;width:2.4px;height:170px;background:#dcdcdc;"></div>
<svg style="left:35px;top:102px" width="50" height="17" viewBox="0 0 50 17"><path d="M0.5 16.5 L5 2.5 Q5.8 0.5 8 0.5 L42 0.5 Q44.2 0.5 45 2.5 L49.5 16.5" fill="#fbfbfb" stroke="#9a9a9a" stroke-width="1"/></svg>
<div class="t" style="left:42.5px;top:106px;font-size:11px;letter-spacing:-0.393px;">Código</div>
<svg style="left:78px;top:102px" width="40" height="17" viewBox="0 0 40 17"><path d="M0.5 16.5 L5 2.5 Q5.8 0.5 8 0.5 L32 0.5 Q34.2 0.5 35 2.5 L39.5 16.5" fill="#fbfbfb" stroke="#9a9a9a" stroke-width="1"/></svg>
<div class="t" style="left:85.7px;top:106px;font-size:11px;letter-spacing:-0.234px;">Data</div>
<svg style="left:111px;top:102px" width="47" height="18" viewBox="0 0 47 18"><path d="M0.5 17.5 L5 2.5 Q5.8 0.5 8 0.5 L39 0.5 Q41.2 0.5 42 2.5 L46.5 17.5" fill="#ffffff" stroke="#9a9a9a" stroke-width="1"/></svg>
<div class="t" style="left:118.7px;top:106px;font-size:11px;letter-spacing:-0.661px;">Page1</div>
<div style="left:32px;top:123px;width:190px;height:7px;background-image:radial-gradient(circle at 1px 1px,#cfcfcf 1px,transparent 1.3px),radial-gradient(circle at 3px 4.5px,#cfcfcf 1px,transparent 1.3px);background-size:4px 7px;"></div>
<svg style="left:225px;top:122px" width="10" height="10" viewBox="0 0 10 10"><rect x="0.5" y="0.5" width="9" height="9" fill="#fbfbfb" stroke="#8a4a4a"/><path d="M0.5 1.2 L9.5 1.2" stroke="#7a3a3a" stroke-width="1.6"/><path d="M2 3 L8.5 9 M8 3 L2 9" stroke="#3a2a2a" stroke-width="1.4"/></svg>
<div style="left:29px;top:136px;width:207px;height:20px;background:#fff;border:1px solid #7a7a7a;"></div>
<div class="t" style="left:33.4px;top:141px;font-size:11px;letter-spacing:-0.270px;">Memo1: TfrxMemoView</div>
<svg style="left:222px;top:142px" width="9" height="6" viewBox="0 0 9 6"><path d="M0.7 0.7 L4.5 4.5 L8.3 0.7" fill="none" stroke="#444" stroke-width="1.1"/></svg>
<div style="left:29px;top:158px;width:207px;height:23px;background:#f8f8f8;"></div>
<svg style="left:35px;top:166px" width="75" height="16" viewBox="0 0 75 16"><path d="M0.5 15.5 L5 2.5 Q5.8 0.5 8 0.5 L67 0.5 Q69.2 0.5 70 2.5 L74.5 15.5" fill="#ffffff" stroke="#9a9a9a" stroke-width="1"/></svg>
<div class="t" style="left:42.5px;top:169px;font-size:11px;letter-spacing:-0.251px;">Propiedades</div>
<svg style="left:103px;top:166px" width="56" height="15" viewBox="0 0 56 15"><path d="M0.5 14.5 L5 2.5 Q5.8 0.5 8 0.5 L48 0.5 Q50.2 0.5 51 2.5 L55.5 14.5" fill="#fbfbfb" stroke="#9a9a9a" stroke-width="1"/></svg>
<div class="t" style="left:111px;top:169px;font-size:11px;letter-spacing:-0.035px;">Eventos</div>
<div style="left:29px;top:181px;width:207px;height:738px;background:#fff;border:1px solid #a0a0a0;border-bottom:none;"></div>
<div style="left:30px;top:182px;width:76px;height:737px;overflow:hidden;">
<div style="left:0;top:0.6px;width:76px;height:16px;background:#f0f0f0;"></div>
<div class="pn" style="left:13.5px;top:3.8px;letter-spacing:-0.269px;">Align</div>
<div class="pn" style="left:13.5px;top:19.8px;letter-spacing:-0.303px;">AllowExpress</div>
<div class="pn" style="left:13.5px;top:35.8px;letter-spacing:-0.335px;">AllowHTMLTa</div>
<div class="pn" style="left:13.5px;top:51.8px;letter-spacing:-0.310px;">AutoWidth</div>
<div class="pn" style="left:13.5px;top:67.8px;letter-spacing:-0.318px;">CharSpacing</div>
<div class="pn" style="left:13.5px;top:83.8px;letter-spacing:-0.293px;">Clipped</div>
<div class="pn" style="left:13.5px;top:99.8px;letter-spacing:-0.289px;">Color</div>
<div class="pn" style="left:13.5px;top:115.8px;letter-spacing:-0.303px;">Cursor</div>
<div class="pn" style="left:13.5px;top:131.8px;letter-spacing:-0.288px;">DataField</div>
<div class="pn" style="left:13.5px;top:147.8px;letter-spacing:-0.312px;">DataSet</div>
<div class="pn" style="left:13.5px;top:163.8px;letter-spacing:-0.275px;">Description</div>
<div class="pn" style="left:13.5px;top:179.8px;letter-spacing:-0.311px;">DisplayForma</div>
<svg style="left:3px;top:180.1px" width="9" height="9" viewBox="0 0 9 9"><rect x="0.5" y="0.5" width="8" height="8" fill="#fff" stroke="#8c8c8c"/><path d="M2 4.5 L7 4.5 M4.5 2 L4.5 7" stroke="#4a4a4a" stroke-width="1"/></svg>
<div class="pn" style="left:13.5px;top:195.8px;letter-spacing:-0.314px;">ExpressionDe</div>
<div class="pn" style="left:13.5px;top:211.8px;letter-spacing:-0.193px;">Fill</div>
<svg style="left:3px;top:212.1px" width="9" height="9" viewBox="0 0 9 9"><rect x="0.5" y="0.5" width="8" height="8" fill="#fff" stroke="#8c8c8c"/><path d="M2 4.5 L7 4.5 M4.5 2 L4.5 7" stroke="#4a4a4a" stroke-width="1"/></svg>
<div class="pn" style="left:13.5px;top:227.8px;letter-spacing:-0.261px;">FillType</div>
<div class="pn" style="left:13.5px;top:243.8px;letter-spacing:-0.319px;">FlowTo</div>
<div class="pn" style="left:13.5px;top:259.8px;letter-spacing:-0.303px;">Font</div>
<svg style="left:3px;top:260.1px" width="9" height="9" viewBox="0 0 9 9"><rect x="0.5" y="0.5" width="8" height="8" fill="#fff" stroke="#8c8c8c"/><path d="M2 4.5 L7 4.5 M4.5 2 L4.5 7" stroke="#4a4a4a" stroke-width="1"/></svg>
<div class="pn" style="left:13.5px;top:275.8px;letter-spacing:-0.350px;">Frame</div>
<svg style="left:3px;top:276.1px" width="9" height="9" viewBox="0 0 9 9"><rect x="0.5" y="0.5" width="8" height="8" fill="#fff" stroke="#8c8c8c"/><path d="M2 4.5 L7 4.5 M4.5 2 L4.5 7" stroke="#4a4a4a" stroke-width="1"/></svg>
<div class="pn" style="left:13.5px;top:291.8px;letter-spacing:-0.387px;">GapX</div>
<div class="pn" style="left:13.5px;top:307.8px;letter-spacing:-0.387px;">GapY</div>
<div class="pn" style="left:13.5px;top:323.8px;letter-spacing:-0.297px;">HAlign</div>
<div class="pn" style="left:13.5px;top:339.8px;font-weight:bold;letter-spacing:0.399px;">Height</div>
<div class="pn" style="left:13.5px;top:355.8px;letter-spacing:-0.310px;">HideZeros</div>
<div class="pn" style="left:13.5px;top:371.8px;letter-spacing:-0.262px;">Highlight</div>
<svg style="left:3px;top:372.1px" width="9" height="9" viewBox="0 0 9 9"><rect x="0.5" y="0.5" width="8" height="8" fill="#fff" stroke="#8c8c8c"/><path d="M2 4.5 L7 4.5 M4.5 2 L4.5 7" stroke="#4a4a4a" stroke-width="1"/></svg>
<div class="pn" style="left:13.5px;top:387.8px;letter-spacing:-0.269px;">Hint</div>
<div class="pn" style="left:13.5px;top:403.8px;letter-spacing:-0.280px;">Hyperlink</div>
<svg style="left:3px;top:404.1px" width="9" height="9" viewBox="0 0 9 9"><rect x="0.5" y="0.5" width="8" height="8" fill="#fff" stroke="#8c8c8c"/><path d="M2 4.5 L7 4.5 M4.5 2 L4.5 7" stroke="#4a4a4a" stroke-width="1"/></svg>
<div class="pn" style="left:13.5px;top:419.8px;font-weight:bold;letter-spacing:0.353px;">Left</div>
<div class="pn" style="left:13.5px;top:435.8px;letter-spacing:-0.303px;">LineSpacing</div>
<div class="pn" style="left:13.5px;top:451.8px;letter-spacing:-0.420px;">Memo</div>
<div class="pn" style="left:13.5px;top:467.8px;font-weight:bold;letter-spacing:0.524px;">Name</div>
<div class="pn" style="left:13.5px;top:483.8px;letter-spacing:-0.330px;">ParagraphGa</div>
<div class="pn" style="left:13.5px;top:499.8px;letter-spacing:-0.299px;">ParentFont</div>
<div class="pn" style="left:13.5px;top:515.8px;letter-spacing:-0.265px;">Printable</div>
<div class="pn" style="left:13.5px;top:531.8px;letter-spacing:-0.263px;">Restrictions</div>
<svg style="left:3px;top:532.1px" width="9" height="9" viewBox="0 0 9 9"><rect x="0.5" y="0.5" width="8" height="8" fill="#fff" stroke="#8c8c8c"/><path d="M2 4.5 L7 4.5 M4.5 2 L4.5 7" stroke="#4a4a4a" stroke-width="1"/></svg>
<div class="pn" style="left:13.5px;top:547.8px;letter-spacing:-0.282px;">Rotation</div>
<div class="pn" style="left:13.5px;top:563.8px;letter-spacing:-0.339px;">RTLReading</div>
<div class="pn" style="left:13.5px;top:579.8px;letter-spacing:-0.303px;">ShiftMode</div>
<div class="pn" style="left:13.5px;top:595.8px;letter-spacing:-0.324px;">ShowHint</div>
<div class="pn" style="left:13.5px;top:611.8px;letter-spacing:-0.312px;">StretchMode</div>
<div class="pn" style="left:13.5px;top:627.8px;letter-spacing:-0.269px;">Style</div>
<div class="pn" style="left:13.5px;top:643.8px;letter-spacing:-0.333px;">SuppressRep</div>
<div class="pn" style="left:13.5px;top:659.8px;letter-spacing:-0.325px;">Tag</div>
<div class="pn" style="left:13.5px;top:675.8px;letter-spacing:-0.291px;">TagStr</div>
<div class="pn" style="left:13.5px;top:691.8px;font-weight:bold;letter-spacing:0.451px;">Top</div>
<div class="pn" style="left:13.5px;top:707.8px;letter-spacing:-0.289px;">Underlines</div>
<div class="pn" style="left:13.5px;top:723.8px;letter-spacing:-0.297px;">UseDefaultCl</div>
</div>
<div style="left:30px;top:198px;width:188px;height:1px;background:#ececec;"></div>
<div class="pv" style="left:107.5px;top:185.8px;color:#000;letter-spacing:-0.289px;">baNone</div>
<div style="left:30px;top:214px;width:188px;height:1px;background:#ececec;"></div>
<div class="cb" style="left:108px;top:201.1px;"></div>
<svg style="left:109px;top:202.1px" width="9" height="9" viewBox="0 0 9 9"><path d="M1.2 4.2 L3.5 6.6 L7.8 1.6" fill="none" stroke="#000" stroke-width="1.7"/></svg>
<div class="pv" style="left:121.5px;top:201.8px;letter-spacing:-0.2px;">True</div>
<div style="left:30px;top:230px;width:188px;height:1px;background:#ececec;"></div>
<div class="cb" style="left:108px;top:217.1px;"></div>
<div class="pv" style="left:121.5px;top:217.8px;letter-spacing:-0.2px;">False</div>
<div style="left:30px;top:246px;width:188px;height:1px;background:#ececec;"></div>
<div class="cb" style="left:108px;top:233.1px;"></div>
<div class="pv" style="left:121.5px;top:233.8px;letter-spacing:-0.2px;">False</div>
<div style="left:30px;top:262px;width:188px;height:1px;background:#ececec;"></div>
<div class="pv" style="left:107.5px;top:249.8px;letter-spacing:-0.275px;">0</div>
<div style="left:30px;top:278px;width:188px;height:1px;background:#ececec;"></div>
<div class="cb" style="left:108px;top:265.1px;"></div>
<svg style="left:109px;top:266.1px" width="9" height="9" viewBox="0 0 9 9"><path d="M1.2 4.2 L3.5 6.6 L7.8 1.6" fill="none" stroke="#000" stroke-width="1.7"/></svg>
<div class="pv" style="left:121.5px;top:265.8px;letter-spacing:-0.2px;">True</div>
<div style="left:30px;top:294px;width:188px;height:1px;background:#ececec;"></div>
<div style="left:108px;top:281.1px;width:11px;height:11px;background:#000;"></div>
<div class="pv" style="left:121.5px;top:281.8px;letter-spacing:-0.3px;">clNone</div>
<div style="left:30px;top:310px;width:188px;height:1px;background:#ececec;"></div>
<div class="pv" style="left:107.5px;top:297.8px;letter-spacing:-0.220px;">crDefault</div>
<div style="left:30px;top:326px;width:188px;height:1px;background:#ececec;"></div>
<div style="left:30px;top:342px;width:188px;height:1px;background:#ececec;"></div>
<div class="pv" style="left:107.5px;top:329.8px;letter-spacing:-0.239px;">(No asignado)</div>
<div style="left:30px;top:358px;width:188px;height:1px;background:#ececec;"></div>
<div style="left:30px;top:374px;width:188px;height:1px;background:#ececec;"></div>
<div style="left:30px;top:390px;width:188px;height:1px;background:#ececec;"></div>
<div class="pv" style="left:107.5px;top:377.8px;letter-spacing:-0.138px;">[,]</div>
<div style="left:30px;top:406px;width:188px;height:1px;background:#ececec;"></div>
<div class="pv" style="left:107.5px;top:393.8px;letter-spacing:-0.220px;">(TfrxCustomFill)</div>
<div style="left:30px;top:422px;width:188px;height:1px;background:#ececec;"></div>
<div class="pv" style="left:107.5px;top:409.8px;letter-spacing:-0.224px;">ftBrush</div>
<div style="left:30px;top:438px;width:188px;height:1px;background:#ececec;"></div>
<div style="left:30px;top:454px;width:188px;height:1px;background:#ececec;"></div>
<div class="pv" style="left:107.5px;top:441.8px;letter-spacing:-0.232px;">(TFont)</div>
<div style="left:30px;top:470px;width:188px;height:1px;background:#ececec;"></div>
<div class="pv" style="left:107.5px;top:457.8px;letter-spacing:-0.237px;">(TfrxFrame)</div>
<div style="left:30px;top:486px;width:188px;height:1px;background:#ececec;"></div>
<div class="pv" style="left:107.5px;top:473.8px;letter-spacing:-0.275px;">2</div>
<div style="left:30px;top:502px;width:188px;height:1px;background:#ececec;"></div>
<div class="pv" style="left:107.5px;top:489.8px;letter-spacing:-0.275px;">1</div>
<div style="left:30px;top:518px;width:188px;height:1px;background:#ececec;"></div>
<div class="pv" style="left:107.5px;top:505.8px;letter-spacing:-0.229px;">haLeft</div>
<div style="left:30px;top:534px;width:188px;height:1px;background:#ececec;"></div>
<div class="pv" style="left:107.5px;top:521.8px;font-weight:bold;letter-spacing:0.612px;">16</div>
<div style="left:30px;top:550px;width:188px;height:1px;background:#ececec;"></div>
<div class="cb" style="left:108px;top:537.1px;"></div>
<div class="pv" style="left:121.5px;top:537.8px;letter-spacing:-0.2px;">False</div>
<div style="left:30px;top:566px;width:188px;height:1px;background:#ececec;"></div>
<div class="pv" style="left:107.5px;top:553.8px;letter-spacing:-0.207px;">(TfrxHighlight)</div>
<div style="left:30px;top:582px;width:188px;height:1px;background:#ececec;"></div>
<div style="left:30px;top:598px;width:188px;height:1px;background:#ececec;"></div>
<div class="pv" style="left:107.5px;top:585.8px;letter-spacing:-0.216px;">(TfrxHyperlink)</div>
<div style="left:30px;top:614px;width:188px;height:1px;background:#ececec;"></div>
<div class="pv" style="left:107.5px;top:601.8px;font-weight:bold;letter-spacing:0.612px;">455</div>
<div style="left:30px;top:630px;width:188px;height:1px;background:#ececec;"></div>
<div class="pv" style="left:107.5px;top:617.8px;letter-spacing:-0.275px;">2</div>
<div style="left:30px;top:646px;width:188px;height:1px;background:#ececec;"></div>
<div class="pv" style="left:107.5px;top:633.8px;letter-spacing:-0.236px;">(TWideStrings)</div>
<div style="left:30px;top:662px;width:188px;height:1px;background:#ececec;"></div>
<div class="pv" style="left:107.5px;top:649.8px;font-weight:bold;letter-spacing:0.758px;">Memo1</div>
<div style="left:30px;top:678px;width:188px;height:1px;background:#ececec;"></div>
<div class="pv" style="left:107.5px;top:665.8px;letter-spacing:-0.275px;">0</div>
<div style="left:30px;top:694px;width:188px;height:1px;background:#ececec;"></div>
<div class="cb" style="left:108px;top:681.1px;"></div>
<div class="pv" style="left:121.5px;top:681.8px;letter-spacing:-0.2px;">False</div>
<div style="left:30px;top:710px;width:188px;height:1px;background:#ececec;"></div>
<div class="cb" style="left:108px;top:697.1px;"></div>
<svg style="left:109px;top:698.1px" width="9" height="9" viewBox="0 0 9 9"><path d="M1.2 4.2 L3.5 6.6 L7.8 1.6" fill="none" stroke="#000" stroke-width="1.7"/></svg>
<div class="pv" style="left:121.5px;top:697.8px;letter-spacing:-0.2px;">True</div>
<div style="left:30px;top:726px;width:188px;height:1px;background:#ececec;"></div>
<div class="pv" style="left:107.5px;top:713.8px;letter-spacing:-0.138px;">[]</div>
<div style="left:30px;top:742px;width:188px;height:1px;background:#ececec;"></div>
<div class="pv" style="left:107.5px;top:729.8px;letter-spacing:-0.275px;">0</div>
<div style="left:30px;top:758px;width:188px;height:1px;background:#ececec;"></div>
<div class="cb" style="left:108px;top:745.1px;"></div>
<div class="pv" style="left:121.5px;top:745.8px;letter-spacing:-0.2px;">False</div>
<div style="left:30px;top:774px;width:188px;height:1px;background:#ececec;"></div>
<div class="pv" style="left:107.5px;top:761.8px;letter-spacing:-0.278px;">smAlways</div>
<div style="left:30px;top:790px;width:188px;height:1px;background:#ececec;"></div>
<div class="cb" style="left:108px;top:777.1px;"></div>
<div class="pv" style="left:121.5px;top:777.8px;letter-spacing:-0.2px;">False</div>
<div style="left:30px;top:806px;width:188px;height:1px;background:#ececec;"></div>
<div class="pv" style="left:107.5px;top:793.8px;letter-spacing:-0.252px;">smDontStretch</div>
<div style="left:30px;top:822px;width:188px;height:1px;background:#ececec;"></div>
<div style="left:30px;top:838px;width:188px;height:1px;background:#ececec;"></div>
<div class="cb" style="left:108px;top:825.1px;"></div>
<div class="pv" style="left:121.5px;top:825.8px;letter-spacing:-0.2px;">False</div>
<div style="left:30px;top:854px;width:188px;height:1px;background:#ececec;"></div>
<div class="pv" style="left:107.5px;top:841.8px;letter-spacing:-0.275px;">0</div>
<div style="left:30px;top:870px;width:188px;height:1px;background:#ececec;"></div>
<div style="left:30px;top:886px;width:188px;height:1px;background:#ececec;"></div>
<div class="pv" style="left:107.5px;top:873.8px;font-weight:bold;letter-spacing:0.612px;">3</div>
<div style="left:30px;top:902px;width:188px;height:1px;background:#ececec;"></div>
<div class="cb" style="left:108px;top:889.1px;"></div>
<div class="pv" style="left:121.5px;top:889.8px;letter-spacing:-0.2px;">False</div>
<div style="left:30px;top:918px;width:188px;height:1px;background:#ececec;"></div>
<div class="cb" style="left:108px;top:905.1px;"></div>
<div class="pv" style="left:121.5px;top:905.8px;letter-spacing:-0.2px;">False</div>
<div style="left:105px;top:182px;width:1px;height:737px;background:#ececec;"></div>
<svg style="left:202px;top:183px" width="15" height="15" viewBox="0 0 15 15"><rect x="0.5" y="0.5" width="14" height="14" fill="#e6e6e6" stroke="#a8a8a8"/><path d="M0.5 14.5 L14.5 14.5 L14.5 0.5" fill="none" stroke="#6e6e6e"/><path d="M4 5.5 L11 5.5 L7.5 9.5 Z" fill="#000"/></svg>
<div style="left:218px;top:182px;width:17px;height:737px;background:#f0f0f0;"></div>
<svg style="left:222px;top:187px" width="9" height="6" viewBox="0 0 9 6"><path d="M0.8 5 L4.5 1.2 L8.2 5" fill="none" stroke="#505050" stroke-width="1.6"/></svg>
<div style="left:218px;top:200px;width:15px;height:665px;background:#cdcdcd;"></div>
<div style="left:236px;top:121px;width:7px;height:798px;background:#f0f0f0;"></div>
<div style="left:236px;top:557px;width:6px;height:29px;background:#d6d7cf;"></div>
<div style="left:238px;top:562px;width:2px;height:20px;background:repeating-linear-gradient(to bottom,#fdfdfd 0 1px,#9a9a9a 1px 2px,transparent 2px 3px);"></div>
<div style="left:303px;top:124px;width:762px;height:14px;background:#fff;"></div>
<div class="t" style="left:420.5px;top:126.5px;font-size:9.5px;width:18px;text-align:center;color:#000;letter-spacing:-0.3px;">100</div>
<div style="left:366px;top:128px;width:1px;height:4px;background:#000;"></div>
<div class="t" style="left:545.5px;top:126.5px;font-size:9.5px;width:18px;text-align:center;color:#000;letter-spacing:-0.3px;">200</div>
<div style="left:491px;top:128px;width:1px;height:4px;background:#000;"></div>
<div class="t" style="left:670.5px;top:126.5px;font-size:9.5px;width:18px;text-align:center;color:#000;letter-spacing:-0.3px;">300</div>
<div style="left:616px;top:128px;width:1px;height:4px;background:#000;"></div>
<div class="t" style="left:795.5px;top:126.5px;font-size:9.5px;width:18px;text-align:center;color:#000;letter-spacing:-0.3px;">400</div>
<div style="left:741px;top:128px;width:1px;height:4px;background:#000;"></div>
<div class="t" style="left:920.5px;top:126.5px;font-size:9.5px;width:18px;text-align:center;color:#000;letter-spacing:-0.3px;">500</div>
<div style="left:866px;top:128px;width:1px;height:4px;background:#000;"></div>
<div class="t" style="left:1045.5px;top:126.5px;font-size:9.5px;width:18px;text-align:center;color:#000;letter-spacing:-0.3px;">600</div>
<div style="left:991px;top:128px;width:1px;height:4px;background:#000;"></div>
<div style="left:872px;top:124px;width:1px;height:11px;background:#000;"></div>
<div style="left:245px;top:145px;width:13px;height:774px;background:#fff;"></div>
<div class="t" style="left:242px;top:170px;width:18px;height:10px;font-size:9.5px;letter-spacing:-0.3px;text-align:center;color:#000;transform:rotate(-90deg);">300</div>
<div style="left:249px;top:236px;width:4px;height:1px;background:#000;"></div>
<div class="t" style="left:242px;top:295px;width:18px;height:10px;font-size:9.5px;letter-spacing:-0.3px;text-align:center;color:#000;transform:rotate(-90deg);">400</div>
<div style="left:249px;top:361px;width:4px;height:1px;background:#000;"></div>
<div class="t" style="left:242px;top:420px;width:18px;height:10px;font-size:9.5px;letter-spacing:-0.3px;text-align:center;color:#000;transform:rotate(-90deg);">500</div>
<div style="left:249px;top:486px;width:4px;height:1px;background:#000;"></div>
<div class="t" style="left:242px;top:545px;width:18px;height:10px;font-size:9.5px;letter-spacing:-0.3px;text-align:center;color:#000;transform:rotate(-90deg);">600</div>
<div style="left:249px;top:611px;width:4px;height:1px;background:#000;"></div>
<div class="t" style="left:242px;top:670px;width:18px;height:10px;font-size:9.5px;letter-spacing:-0.3px;text-align:center;color:#000;transform:rotate(-90deg);">700</div>
<div style="left:249px;top:736px;width:4px;height:1px;background:#000;"></div>
<div class="t" style="left:242px;top:795px;width:18px;height:10px;font-size:9.5px;letter-spacing:-0.3px;text-align:center;color:#000;transform:rotate(-90deg);">800</div>
<div style="left:249px;top:861px;width:4px;height:1px;background:#000;"></div>
<div style="left:249px;top:917px;width:5px;height:2px;background:#000;"></div>
<div style="left:263px;top:143px;width:11px;height:776px;background:#808080;"></div>
<div style="left:273px;top:143px;width:1px;height:776px;background:#6c6c6c;"></div>
<div style="left:274px;top:143px;width:791px;height:776px;background:#fff;"></div>
<div style="left:301px;top:143px;width:1px;height:776px;background:repeating-linear-gradient(to bottom,#9a9a9a 0 3px,#fff 3px 5px);"></div>
<div class="t" style="left:305px;top:136.3px;height:15px;width:60px;overflow:hidden;"><div class="t" style="left:0;top:0;font-size:13.5px;font-weight:bold;font-style:italic;color:#2a6cb0;letter-spacing:-0.2px;">Nota:</div></div>
<div style="left:274px;top:124px;width:791px;height:19px;background:#f0f0f0;"></div>
<div style="left:303px;top:124px;width:762px;height:14px;background:#fff;"></div>
<div class="t" style="left:420.5px;top:126.5px;font-size:9.5px;width:18px;text-align:center;color:#000;letter-spacing:-0.3px;">100</div>
<div style="left:366px;top:128px;width:1px;height:4px;background:#000;"></div>
<div class="t" style="left:545.5px;top:126.5px;font-size:9.5px;width:18px;text-align:center;color:#000;letter-spacing:-0.3px;">200</div>
<div style="left:491px;top:128px;width:1px;height:4px;background:#000;"></div>
<div class="t" style="left:670.5px;top:126.5px;font-size:9.5px;width:18px;text-align:center;color:#000;letter-spacing:-0.3px;">300</div>
<div style="left:616px;top:128px;width:1px;height:4px;background:#000;"></div>
<div class="t" style="left:795.5px;top:126.5px;font-size:9.5px;width:18px;text-align:center;color:#000;letter-spacing:-0.3px;">400</div>
<div style="left:741px;top:128px;width:1px;height:4px;background:#000;"></div>
<div class="t" style="left:920.5px;top:126.5px;font-size:9.5px;width:18px;text-align:center;color:#000;letter-spacing:-0.3px;">500</div>
<div style="left:866px;top:128px;width:1px;height:4px;background:#000;"></div>
<div class="t" style="left:1045.5px;top:126.5px;font-size:9.5px;width:18px;text-align:center;color:#000;letter-spacing:-0.3px;">600</div>
<div style="left:991px;top:128px;width:1px;height:4px;background:#000;"></div>
<div style="left:872px;top:124px;width:1px;height:11px;background:#000;"></div>
<div class="blue" style="left:302px;top:158px;width:170px;height:23px;font-size:13.3px;line-height:26.5px;padding-left:2px;">Referencia</div>
<div style="left:302px;top:182px;width:170px;height:1px;background:#9a9a9a;"></div>
<div style="left:301.5px;top:158px;width:4px;height:1.15px;background:#000;"></div>
<div style="left:301.5px;top:158px;width:1.15px;height:4px;background:#000;"></div>
<div style="left:469.8px;top:158px;width:4px;height:1.15px;background:#000;"></div>
<div style="left:472.65000000000003px;top:158px;width:1.15px;height:4px;background:#000;"></div>
<div style="left:301.5px;top:181.85px;width:4px;height:1.15px;background:#000;"></div>
<div style="left:301.5px;top:179px;width:1.15px;height:4px;background:#000;"></div>
<div style="left:469.8px;top:181.85px;width:4px;height:1.15px;background:#000;"></div>
<div style="left:472.65000000000003px;top:179px;width:1.15px;height:4px;background:#000;"></div>
<div class="blue" style="left:477px;top:158px;width:389px;height:23px;font-size:13.3px;line-height:26.5px;padding-left:2px;">Descripción</div>
<div style="left:477px;top:182px;width:389px;height:1px;background:#9a9a9a;"></div>
<div style="left:476.5px;top:158px;width:4px;height:1.15px;background:#000;"></div>
<div style="left:476.5px;top:158px;width:1.15px;height:4px;background:#000;"></div>
<div style="left:863.8px;top:158px;width:4px;height:1.15px;background:#000;"></div>
<div style="left:866.65px;top:158px;width:1.15px;height:4px;background:#000;"></div>
<div style="left:476.5px;top:181.85px;width:4px;height:1.15px;background:#000;"></div>
<div style="left:476.5px;top:179px;width:1.15px;height:4px;background:#000;"></div>
<div style="left:863.8px;top:181.85px;width:4px;height:1.15px;background:#000;"></div>
<div style="left:866.65px;top:179px;width:1.15px;height:4px;background:#000;"></div>
<div class="blue" style="left:871px;top:158px;width:84px;height:23px;font-size:13.3px;line-height:26.5px;padding-left:2px;">Cantidad</div>
<div style="left:871px;top:182px;width:84px;height:1px;background:#9a9a9a;"></div>
<div style="left:870.5px;top:158px;width:4px;height:1.15px;background:#000;"></div>
<div style="left:870.5px;top:158px;width:1.15px;height:4px;background:#000;"></div>
<div style="left:952.8px;top:158px;width:4px;height:1.15px;background:#000;"></div>
<div style="left:955.65px;top:158px;width:1.15px;height:4px;background:#000;"></div>
<div style="left:870.5px;top:181.85px;width:4px;height:1.15px;background:#000;"></div>
<div style="left:870.5px;top:179px;width:1.15px;height:4px;background:#000;"></div>
<div style="left:952.8px;top:181.85px;width:4px;height:1.15px;background:#000;"></div>
<div style="left:955.65px;top:179px;width:1.15px;height:4px;background:#000;"></div>
<div class="blue" style="left:960px;top:158px;width:82px;height:23px;font-size:13.3px;line-height:26.5px;padding-left:2px;">Precio</div>
<div style="left:960px;top:182px;width:82px;height:1px;background:#9a9a9a;"></div>
<div style="left:959.5px;top:158px;width:4px;height:1.15px;background:#000;"></div>
<div style="left:959.5px;top:158px;width:1.15px;height:4px;background:#000;"></div>
<div style="left:1039.8px;top:158px;width:4px;height:1.15px;background:#000;"></div>
<div style="left:1042.6499999999999px;top:158px;width:1.15px;height:4px;background:#000;"></div>
<div style="left:959.5px;top:181.85px;width:4px;height:1.15px;background:#000;"></div>
<div style="left:959.5px;top:179px;width:1.15px;height:4px;background:#000;"></div>
<div style="left:1039.8px;top:181.85px;width:4px;height:1.15px;background:#000;"></div>
<div style="left:1042.6499999999999px;top:179px;width:1.15px;height:4px;background:#000;"></div>
<div class="blue" style="left:1047px;top:158px;width:34px;height:23px;font-size:13.3px;line-height:26.5px;padding-left:2px;">%</div>
<div style="left:1047px;top:182px;width:34px;height:1px;background:#9a9a9a;"></div>
<div style="left:1046.5px;top:158px;width:4px;height:1.15px;background:#000;"></div>
<div style="left:1046.5px;top:158px;width:1.15px;height:4px;background:#000;"></div>
<div style="left:1078.8px;top:158px;width:4px;height:1.15px;background:#000;"></div>
<div style="left:1081.6499999999999px;top:158px;width:1.15px;height:4px;background:#000;"></div>
<div style="left:1046.5px;top:181.85px;width:4px;height:1.15px;background:#000;"></div>
<div style="left:1046.5px;top:179px;width:1.15px;height:4px;background:#000;"></div>
<div style="left:1078.8px;top:181.85px;width:4px;height:1.15px;background:#000;"></div>
<div style="left:1081.6499999999999px;top:179px;width:1.15px;height:4px;background:#000;"></div>
<div style="left:302px;top:143px;width:1px;height:40px;background:#000;"></div>
<div style="left:301px;top:143px;width:1px;height:40px;background:rgba(0,0,0,0.45);"></div>
<div style="left:302px;top:151px;width:5px;height:2px;background:#000;opacity:.8;"></div>
<div style="left:302px;top:157px;width:5px;height:2px;background:#000;opacity:.8;"></div>
<div style="left:389.5px;top:151.35px;width:4px;height:1.15px;background:#000;"></div>
<div style="left:392.35px;top:148.5px;width:1.15px;height:4px;background:#000;"></div>
<div class="gold" style="left:301px;top:192px;width:780px;height:21px;"></div>
<svg style="left:302px;top:195.5px" width="7" height="10" viewBox="0 0 7 10"><path d="M1.5 0 L1.5 9" stroke="#f04828" stroke-width="1"/><path d="M2.9 0.8 L6.2 3.9 L2.9 7 Z" fill="#f02818"/></svg>
<div class="bt" style="left:307.6px;top:197px;font-weight:bold;-webkit-text-stroke:0.25px #000;letter-spacing:0.838px;">MasterData</div>
<div class="bt" style="left:383.9px;top:197px;letter-spacing:0.018px;">: BandaMaestra</div>
<div class="gold" style="left:301px;top:223px;width:780px;height:20px;border-bottom:none;"></div>
<svg style="left:302px;top:226.5px" width="7" height="10" viewBox="0 0 7 10"><path d="M1.5 0 L1.5 9" stroke="#f04828" stroke-width="1"/><path d="M2.9 0.8 L6.2 3.9 L2.9 7 Z" fill="#f02818"/></svg>
<div class="bt" style="left:307.6px;top:228px;font-weight:bold;-webkit-text-stroke:0.25px #000;letter-spacing:0.498px;">DetailData</div>
<div class="bt" style="left:374.2px;top:228px;letter-spacing:0.017px;">: BandaDetalleLineas</div>
<div class="band" style="left:301px;top:242px;width:780px;height:30px;border-top:none;background:transparent;"></div>
<div class="band" style="left:301px;top:276px;width:780px;height:41px;"></div>
<div class="ghead" style="left:302px;top:277px;width:778px;height:19px;"></div>
<svg style="left:302px;top:279.5px" width="7" height="10" viewBox="0 0 7 10"><path d="M1.5 0 L1.5 9" stroke="#f04828" stroke-width="1"/><path d="M2.9 0.8 L6.2 3.9 L2.9 7 Z" fill="#f02818"/></svg>
<div class="bt" style="left:307.6px;top:281px;font-weight:bold;-webkit-text-stroke:0.25px #000;letter-spacing:-0.558px;">Child</div>
<div class="bt" style="left:336.3px;top:281px;letter-spacing:0.017px;">: BandaDescripcionArticulo</div>
<div class="band" style="left:301px;top:322px;width:780px;height:168px;"></div>
<div class="ghead" style="left:302px;top:323px;width:778px;height:19px;"></div>
<svg style="left:302px;top:325.5px" width="7" height="10" viewBox="0 0 7 10"><path d="M1.5 0 L1.5 9" stroke="#f04828" stroke-width="1"/><path d="M2.9 0.8 L6.2 3.9 L2.9 7 Z" fill="#f02818"/></svg>
<div class="bt" style="left:307.6px;top:327px;font-weight:bold;-webkit-text-stroke:0.25px #000;letter-spacing:0.184px;">Footer</div>
<div class="bt" style="left:347.9px;top:327px;letter-spacing:0.018px;">: BandaPiePromocion</div>
<div class="band" style="left:301px;top:499px;width:780px;height:41px;"></div>
<div class="ghead" style="left:302px;top:500px;width:778px;height:19px;"></div>
<svg style="left:302px;top:502.5px" width="7" height="10" viewBox="0 0 7 10"><path d="M1.5 0 L1.5 9" stroke="#f04828" stroke-width="1"/><path d="M2.9 0.8 L6.2 3.9 L2.9 7 Z" fill="#f02818"/></svg>
<div class="bt" style="left:307.6px;top:504px;font-weight:bold;-webkit-text-stroke:0.25px #000;letter-spacing:0.613px;">Header</div>
<div class="bt" style="left:354.0px;top:504px;letter-spacing:0.018px;">: BandaCabeceraSubDetallePropiedadesFijas</div>
<div class="gold" style="left:301px;top:549px;width:780px;height:21px;"></div>
<div class="bt" style="left:307.6px;top:554px;font-weight:bold;-webkit-text-stroke:0.25px #000;letter-spacing:0.445px;">SubdetailData</div>
<div class="bt" style="left:397.4px;top:554px;letter-spacing:0.018px;">: BandaSubDetallePropiedadesFijas</div>
<div class="band" style="left:301px;top:581px;width:780px;height:41px;"></div>
<div class="ghead" style="left:302px;top:582px;width:778px;height:19px;"></div>
<svg style="left:302px;top:584.5px" width="7" height="10" viewBox="0 0 7 10"><path d="M1.5 0 L1.5 9" stroke="#f04828" stroke-width="1"/><path d="M2.9 0.8 L6.2 3.9 L2.9 7 Z" fill="#f02818"/></svg>
<div class="bt" style="left:307.6px;top:586px;font-weight:bold;-webkit-text-stroke:0.25px #000;letter-spacing:0.613px;">Header</div>
<div class="bt" style="left:354.0px;top:586px;letter-spacing:0.018px;">: BandaCabeceraSubDetallePropiedadesUnicas</div>
<div class="gold" style="left:301px;top:628px;width:780px;height:21px;"></div>
<div class="bt" style="left:307.6px;top:633px;font-weight:bold;-webkit-text-stroke:0.25px #000;letter-spacing:0.445px;">SubdetailData</div>
<div class="bt" style="left:397.4px;top:633px;letter-spacing:0.018px;">: BandaSubDetallePropiedadesUnicas</div>
<div class="gold" style="left:301px;top:659px;width:780px;height:20px;border-bottom:none;"></div>
<svg style="left:302px;top:662.5px" width="7" height="10" viewBox="0 0 7 10"><path d="M1.5 0 L1.5 9" stroke="#f04828" stroke-width="1"/><path d="M2.9 0.8 L6.2 3.9 L2.9 7 Z" fill="#f02818"/></svg>
<div class="bt" style="left:307.6px;top:664px;font-weight:bold;-webkit-text-stroke:0.25px #000;letter-spacing:0.445px;">SubdetailData</div>
<div class="bt" style="left:397.4px;top:664px;letter-spacing:0.019px;">: BandaSubDetalleComponentes</div>
<div class="band" style="left:301px;top:678px;width:780px;height:22px;border-top:none;background:transparent;"></div>
<div class="gold" style="left:301px;top:708px;width:780px;height:21px;"></div>
<svg style="left:302px;top:711.5px" width="7" height="10" viewBox="0 0 7 10"><path d="M1.5 0 L1.5 9" stroke="#f04828" stroke-width="1"/><path d="M2.9 0.8 L6.2 3.9 L2.9 7 Z" fill="#f02818"/></svg>
<div class="bt" style="left:307.6px;top:713px;font-weight:bold;-webkit-text-stroke:0.25px #000;letter-spacing:0.498px;">DetailData</div>
<div class="bt" style="left:374.2px;top:713px;letter-spacing:0.017px;">: BandaDetalleVtos</div>
<div class="band" style="left:301px;top:762px;width:780px;height:46px;"></div>
<div class="ghead" style="left:302px;top:763px;width:778px;height:19px;"></div>
<div class="bt" style="left:307.6px;top:767px;font-weight:bold;-webkit-text-stroke:0.25px #000;letter-spacing:0.184px;">Footer</div>
<div class="bt" style="left:347.9px;top:767px;letter-spacing:0.016px;">: Footer1</div>
<div class="band" style="left:301px;top:841px;width:780px;height:89px;"></div>
<div class="ghead" style="left:302px;top:842px;width:778px;height:19px;"></div>
<svg style="left:302px;top:844.5px" width="7" height="10" viewBox="0 0 7 10"><path d="M1.5 0 L1.5 9" stroke="#f04828" stroke-width="1"/><path d="M2.9 0.8 L6.2 3.9 L2.9 7 Z" fill="#f02818"/></svg>
<div class="bt" style="left:307.6px;top:846px;font-weight:bold;-webkit-text-stroke:0.25px #000;letter-spacing:0.329px;">PageFooter</div>
<div class="bt" style="left:380.2px;top:846px;letter-spacing:0.017px;">: PiePagina</div>
<svg style="left:855px;top:552px" width="12" height="14" viewBox="0 0 12 14"><defs><linearGradient id="dbg" x1="0" y1="0" x2="1" y2="0"><stop offset="0" stop-color="#fff6c8"/><stop offset=".45" stop-color="#f6dc7a"/><stop offset="1" stop-color="#e6b43c"/></linearGradient></defs><path d="M1 3 L1 11.5 Q6 14.2 11 11.5 L11 3 Z" fill="url(#dbg)" stroke="#fbeeb8" stroke-width="1"/><ellipse cx="6" cy="3" rx="5" ry="2.1" fill="#fffbe0" stroke="#fdf0c0" stroke-width="1"/></svg>
<div class="t" style="left:874px;top:554.5px;font-size:12.5px;color:#111;letter-spacing:-0.326px;">DET. LíNEAS DE FACTURAS DE VENTAS</div>
<svg style="left:913px;top:631px" width="12" height="14" viewBox="0 0 12 14"><defs><linearGradient id="dbg" x1="0" y1="0" x2="1" y2="0"><stop offset="0" stop-color="#fff6c8"/><stop offset=".45" stop-color="#f6dc7a"/><stop offset="1" stop-color="#e6b43c"/></linearGradient></defs><path d="M1 3 L1 11.5 Q6 14.2 11 11.5 L11 3 Z" fill="url(#dbg)" stroke="#fbeeb8" stroke-width="1"/><ellipse cx="6" cy="3" rx="5" ry="2.1" fill="#fffbe0" stroke="#fdf0c0" stroke-width="1"/></svg>
<div class="t" style="left:932px;top:633.5px;font-size:12.5px;color:#111;letter-spacing:-0.326px;">DET. LíNEAS DE FACTURAS DE VENTAS</div>
<svg style="left:1008px;top:662px" width="12" height="14" viewBox="0 0 12 14"><defs><linearGradient id="dbg" x1="0" y1="0" x2="1" y2="0"><stop offset="0" stop-color="#fff6c8"/><stop offset=".45" stop-color="#f6dc7a"/><stop offset="1" stop-color="#e6b43c"/></linearGradient></defs><path d="M1 3 L1 11.5 Q6 14.2 11 11.5 L11 3 Z" fill="url(#dbg)" stroke="#fbeeb8" stroke-width="1"/><ellipse cx="6" cy="3" rx="5" ry="2.1" fill="#fffbe0" stroke="#fdf0c0" stroke-width="1"/></svg>
<div class="t" style="left:1027px;top:664.5px;font-size:12.5px;color:#111;letter-spacing:-0.361px;">DET. COMPONENTES</div>
<svg style="left:1033px;top:711px" width="12" height="14" viewBox="0 0 12 14"><defs><linearGradient id="dbg" x1="0" y1="0" x2="1" y2="0"><stop offset="0" stop-color="#fff6c8"/><stop offset=".45" stop-color="#f6dc7a"/><stop offset="1" stop-color="#e6b43c"/></linearGradient></defs><path d="M1 3 L1 11.5 Q6 14.2 11 11.5 L11 3 Z" fill="url(#dbg)" stroke="#fbeeb8" stroke-width="1"/><ellipse cx="6" cy="3" rx="5" ry="2.1" fill="#fffbe0" stroke="#fdf0c0" stroke-width="1"/></svg>
<div class="t" style="left:1052px;top:713.5px;font-size:12.5px;color:#111;letter-spacing:-0.332px;">DET. VENCIMIENTOS</div>
<svg style="left:1060px;top:226px" width="12" height="14" viewBox="0 0 12 14"><defs><linearGradient id="dbg" x1="0" y1="0" x2="1" y2="0"><stop offset="0" stop-color="#fff6c8"/><stop offset=".45" stop-color="#f6dc7a"/><stop offset="1" stop-color="#e6b43c"/></linearGradient></defs><path d="M1 3 L1 11.5 Q6 14.2 11 11.5 L11 3 Z" fill="url(#dbg)" stroke="#fbeeb8" stroke-width="1"/><ellipse cx="6" cy="3" rx="5" ry="2.1" fill="#fffbe0" stroke="#fdf0c0" stroke-width="1"/></svg>
<div class="t" style="left:305.3px;top:249px;font-size:14px;color:#222;letter-spacing:-0.284px;">[DET. LíNEAS DE</div>
<div style="left:303px;top:247px;width:4px;height:1.15px;background:#000;"></div>
<div style="left:303px;top:247px;width:1.15px;height:4px;background:#000;"></div>
<div style="left:470px;top:247px;width:4px;height:1.15px;background:#000;"></div>
<div style="left:472.85px;top:247px;width:1.15px;height:4px;background:#000;"></div>
<div style="left:303px;top:266.85px;width:4px;height:1.15px;background:#000;"></div>
<div style="left:303px;top:264px;width:1.15px;height:4px;background:#000;"></div>
<div style="left:470px;top:266.85px;width:4px;height:1.15px;background:#000;"></div>
<div style="left:472.85px;top:264px;width:1.15px;height:4px;background:#000;"></div>
<div class="t" style="left:482px;top:249px;font-size:14px;color:#111;letter-spacing:-0.287px;">[DescripcionLinea]</div>
<div class="t" style="left:481.6px;top:249px;font-size:14px;color:#301020;font-weight:bold;">[</div>
<div style="left:479px;top:247px;width:4px;height:1.15px;background:#000;"></div>
<div style="left:479px;top:247px;width:1.15px;height:4px;background:#000;"></div>
<div style="left:863px;top:247px;width:4px;height:1.15px;background:#000;"></div>
<div style="left:865.85px;top:247px;width:1.15px;height:4px;background:#000;"></div>
<div style="left:479px;top:266.85px;width:4px;height:1.15px;background:#000;"></div>
<div style="left:479px;top:264px;width:1.15px;height:4px;background:#000;"></div>
<div style="left:863px;top:266.85px;width:4px;height:1.15px;background:#000;"></div>
<div style="left:865.85px;top:264px;width:1.15px;height:4px;background:#000;"></div>
<div class="t" style="left:920px;top:249px;font-size:14px;color:#222;">[DET.</div>
<div style="left:870.3px;top:247px;width:4px;height:1.15px;background:#000;"></div>
<div style="left:870.3px;top:247px;width:1.15px;height:4px;background:#000;"></div>
<div style="left:953.5px;top:247px;width:4px;height:1.15px;background:#000;"></div>
<div style="left:956.35px;top:247px;width:1.15px;height:4px;background:#000;"></div>
<div style="left:870.3px;top:266.85px;width:4px;height:1.15px;background:#000;"></div>
<div style="left:870.3px;top:264px;width:1.15px;height:4px;background:#000;"></div>
<div style="left:953.5px;top:266.85px;width:4px;height:1.15px;background:#000;"></div>
<div style="left:956.35px;top:264px;width:1.15px;height:4px;background:#000;"></div>
<div class="t" style="left:1009px;top:249px;font-size:14px;color:#222;">[DET.</div>
<div style="left:960px;top:247px;width:4px;height:1.15px;background:#000;"></div>
<div style="left:960px;top:247px;width:1.15px;height:4px;background:#000;"></div>
<div style="left:1040px;top:247px;width:4px;height:1.15px;background:#000;"></div>
<div style="left:1042.85px;top:247px;width:1.15px;height:4px;background:#000;"></div>
<div style="left:960px;top:266.85px;width:4px;height:1.15px;background:#000;"></div>
<div style="left:960px;top:264px;width:1.15px;height:4px;background:#000;"></div>
<div style="left:1040px;top:266.85px;width:4px;height:1.15px;background:#000;"></div>
<div style="left:1042.85px;top:264px;width:1.15px;height:4px;background:#000;"></div>
<div style="left:1047px;top:247px;width:4px;height:1.15px;background:#000;"></div>
<div style="left:1047px;top:247px;width:1.15px;height:4px;background:#000;"></div>
<div style="left:1076px;top:247px;width:4px;height:1.15px;background:#000;"></div>
<div style="left:1078.85px;top:247px;width:1.15px;height:4px;background:#000;"></div>
<div style="left:1047px;top:266.85px;width:4px;height:1.15px;background:#000;"></div>
<div style="left:1047px;top:264px;width:1.15px;height:4px;background:#000;"></div>
<div style="left:1076px;top:266.85px;width:4px;height:1.15px;background:#000;"></div>
<div style="left:1078.85px;top:264px;width:1.15px;height:4px;background:#000;"></div>
<div style="left:486px;top:266.5px;width:148px;height:3.5px;overflow:hidden;"><div class="t" style="left:4px;top:-1.8px;font-size:13px;font-weight:bold;color:#222;letter-spacing:-0.2px;">Dimensiones: [Dimensiones]</div></div>
<div style="left:485px;top:266px;width:4px;height:1.15px;background:#000;"></div>
<div style="left:485px;top:266px;width:1.15px;height:4px;background:#000;"></div>
<div style="left:631px;top:266px;width:3px;height:1.15px;background:#000;"></div>
<div style="left:632.85px;top:266px;width:1.15px;height:3px;background:#000;"></div>
<div style="left:722px;top:267.5px;width:72px;height:3px;overflow:hidden;"><div class="t" style="left:0px;top:-1.5px;font-size:11px;font-weight:bold;color:#222;letter-spacing:-0.2px;">[Sujeto] [Sujeto]</div></div>
<div style="left:720px;top:267px;width:4px;height:1.15px;background:#000;"></div>
<div style="left:720px;top:267px;width:1.15px;height:4px;background:#000;"></div>
<div style="left:854.5px;top:267px;width:4px;height:1.15px;background:#000;"></div>
<div style="left:857.35px;top:267px;width:1.15px;height:4px;background:#000;"></div>
<div style="left:486px;top:297px;width:4px;height:1.15px;background:#000;"></div>
<div style="left:486px;top:297px;width:1.15px;height:4px;background:#000;"></div>
<div style="left:863px;top:297px;width:4px;height:1.15px;background:#000;"></div>
<div style="left:865.85px;top:297px;width:1.15px;height:4px;background:#000;"></div>
<div style="left:486px;top:314.85px;width:4px;height:1.15px;background:#000;"></div>
<div style="left:486px;top:312px;width:1.15px;height:4px;background:#000;"></div>
<div style="left:863px;top:314.85px;width:4px;height:1.15px;background:#000;"></div>
<div style="left:865.85px;top:312px;width:1.15px;height:4px;background:#000;"></div>
<div style="left:319px;top:348.3px;width:4.3px;height:1.2px;background:#000;"></div>
<div style="left:319px;top:348.3px;width:1.2px;height:4.3px;background:#000;"></div>
<svg style="left:321px;top:351px" width="14" height="14" viewBox="0 0 14 14"><rect x="0.6" y="0.6" width="12.8" height="12.8" fill="#f4f8fb" stroke="#5a5a5a" stroke-width="1.2"/><rect x="2" y="2" width="10" height="7.5" fill="#c4e0f4"/><ellipse cx="7" cy="5.4" rx="3.4" ry="3" fill="#78c848"/><path d="M6.4 8 L7.6 8 L8.4 10 L5.6 10 Z" fill="#c89a4a"/><rect x="2" y="9.2" width="10" height="1" fill="#4a9a3a"/><rect x="2" y="10.2" width="10" height="1.4" fill="#bfe4a8"/></svg>
<div style="left:319px;top:473.0px;width:4.6px;height:1.2px;background:#000;"></div>
<div style="left:319px;top:469.59999999999997px;width:1.2px;height:4.6px;background:#000;"></div>
<div style="left:319px;top:475px;width:4px;height:1.2px;background:#000;"></div>
<div style="left:319px;top:475px;width:1.2px;height:4px;background:#000;"></div>
<div style="left:319px;top:482.1px;width:4px;height:1.2px;background:#000;"></div>
<div style="left:319px;top:479.3px;width:1.2px;height:4px;background:#000;"></div>
<div style="left:319px;top:475px;width:1.2px;height:8px;background:#000;"></div>
<div class="t" style="left:487px;top:523.5px;font-size:12px;color:#222;letter-spacing:-0.260px;">[PropiedadesFijas]</div>
<div style="left:485.2px;top:521.5px;width:4px;height:1.15px;background:#000;"></div>
<div style="left:485.2px;top:521.5px;width:1.15px;height:4px;background:#000;"></div>
<div style="left:863px;top:521.5px;width:4px;height:1.15px;background:#000;"></div>
<div style="left:865.85px;top:521.5px;width:1.15px;height:4px;background:#000;"></div>
<div style="left:485.2px;top:537.85px;width:4px;height:1.15px;background:#000;"></div>
<div style="left:485.2px;top:535px;width:1.15px;height:4px;background:#000;"></div>
<div style="left:863px;top:537.85px;width:4px;height:1.15px;background:#000;"></div>
<div style="left:865.85px;top:535px;width:1.15px;height:4px;background:#000;"></div>
<div class="t" style="left:487px;top:604.5px;font-size:12px;color:#222;letter-spacing:-0.249px;">[PropiedadesUnicas]</div>
<div style="left:485.2px;top:602.5px;width:4px;height:1.15px;background:#000;"></div>
<div style="left:485.2px;top:602.5px;width:1.15px;height:4px;background:#000;"></div>
<div style="left:863px;top:602.5px;width:4px;height:1.15px;background:#000;"></div>
<div style="left:865.85px;top:602.5px;width:1.15px;height:4px;background:#000;"></div>
<div style="left:485.2px;top:619.35px;width:4px;height:1.15px;background:#000;"></div>
<div style="left:485.2px;top:616.5px;width:1.15px;height:4px;background:#000;"></div>
<div style="left:863px;top:619.35px;width:4px;height:1.15px;background:#000;"></div>
<div style="left:865.85px;top:616.5px;width:1.15px;height:4px;background:#000;"></div>
<div class="t" style="left:487px;top:683.5px;font-size:12px;color:#222;letter-spacing:-0.298px;">[Componentes]</div>
<div style="left:485.2px;top:681.5px;width:4px;height:1.15px;background:#000;"></div>
<div style="left:485.2px;top:681.5px;width:1.15px;height:4px;background:#000;"></div>
<div style="left:863px;top:681.5px;width:4px;height:1.15px;background:#000;"></div>
<div style="left:865.85px;top:681.5px;width:1.15px;height:4px;background:#000;"></div>
<div style="left:485.2px;top:697.35px;width:4px;height:1.15px;background:#000;"></div>
<div style="left:485.2px;top:694.5px;width:1.15px;height:4px;background:#000;"></div>
<div style="left:863px;top:697.35px;width:4px;height:1.15px;background:#000;"></div>
<div style="left:865.85px;top:694.5px;width:1.15px;height:4px;background:#000;"></div>
<div style="left:870.3px;top:786.3px;width:4px;height:1.15px;background:#000;"></div>
<div style="left:870.3px;top:786.3px;width:1.15px;height:4px;background:#000;"></div>
<div style="left:967px;top:786.3px;width:4px;height:1.15px;background:#000;"></div>
<div style="left:969.85px;top:786.3px;width:1.15px;height:4px;background:#000;"></div>
<div style="left:870.3px;top:806.15px;width:4px;height:1.15px;background:#000;"></div>
<div style="left:870.3px;top:803.3px;width:1.15px;height:4px;background:#000;"></div>
<div style="left:967px;top:806.15px;width:4px;height:1.15px;background:#000;"></div>
<div style="left:969.85px;top:803.3px;width:1.15px;height:4px;background:#000;"></div>
<div class="blue" style="left:303.5px;top:861px;width:93px;height:23px;font-size:10px;line-height:28px;padding-left:2px;letter-spacing:-0.083px;">Suma Importes</div>
<div style="left:302.5px;top:861px;width:4px;height:1.15px;background:#000;"></div>
<div style="left:302.5px;top:861px;width:1.15px;height:4px;background:#000;"></div>
<div style="left:393.5px;top:861px;width:4px;height:1.15px;background:#000;"></div>
<div style="left:396.35px;top:861px;width:1.15px;height:4px;background:#000;"></div>
<div style="left:302.5px;top:884.5500000000001px;width:4px;height:1.15px;background:#000;"></div>
<div style="left:302.5px;top:881.7px;width:1.15px;height:4px;background:#000;"></div>
<div style="left:393.5px;top:884.5500000000001px;width:4px;height:1.15px;background:#000;"></div>
<div style="left:396.35px;top:881.7px;width:1.15px;height:4px;background:#000;"></div>
<div style="left:303.5px;top:889px;width:93px;height:19px;overflow:hidden;"><div class="t" style="left:0;top:0.5px;width:92px;text-align:right;font-size:11.5px;font-weight:bold;line-height:14px;color:#222;white-space:normal;word-break:break-all;">[FACTURAS."B<br>RUTO"]</div></div>
<div style="left:302.5px;top:888px;width:4px;height:1.15px;background:#000;"></div>
<div style="left:302.5px;top:888px;width:1.15px;height:4px;background:#000;"></div>
<div style="left:393.5px;top:888px;width:4px;height:1.15px;background:#000;"></div>
<div style="left:396.35px;top:888px;width:1.15px;height:4px;background:#000;"></div>
<div style="left:302.5px;top:906.85px;width:4px;height:1.15px;background:#000;"></div>
<div style="left:302.5px;top:904px;width:1.15px;height:4px;background:#000;"></div>
<div style="left:393.5px;top:906.85px;width:4px;height:1.15px;background:#000;"></div>
<div style="left:396.35px;top:904px;width:1.15px;height:4px;background:#000;"></div>
<div class="blue" style="left:401.0px;top:861px;width:93px;height:23px;font-size:11px;line-height:12px;"><div class="t" style="left:0;top:-7.5px;width:93px;font-size:10.3px;line-height:13px;text-align:center;white-space:normal;font-weight:normal;letter-spacing:0.1px;">[FACTURAS."DES<br>CUENTO_FINANCI<br>ERO"]*[ImporteDt</div></div>
<div style="left:400.0px;top:861px;width:4px;height:1.15px;background:#000;"></div>
<div style="left:400.0px;top:861px;width:1.15px;height:4px;background:#000;"></div>
<div style="left:491.0px;top:861px;width:4px;height:1.15px;background:#000;"></div>
<div style="left:493.85px;top:861px;width:1.15px;height:4px;background:#000;"></div>
<div style="left:400.0px;top:884.5500000000001px;width:4px;height:1.15px;background:#000;"></div>
<div style="left:400.0px;top:881.7px;width:1.15px;height:4px;background:#000;"></div>
<div style="left:491.0px;top:884.5500000000001px;width:4px;height:1.15px;background:#000;"></div>
<div style="left:493.85px;top:881.7px;width:1.15px;height:4px;background:#000;"></div>
<div style="left:401.0px;top:889px;width:93px;height:19px;overflow:hidden;"><div class="t" style="left:0;top:0.5px;width:92px;text-align:right;font-size:11.5px;font-weight:bold;line-height:14px;color:#222;white-space:normal;word-break:break-all;">[ImporteDtoPP]<br></div></div>
<div style="left:400.0px;top:888px;width:4px;height:1.15px;background:#000;"></div>
<div style="left:400.0px;top:888px;width:1.15px;height:4px;background:#000;"></div>
<div style="left:491.0px;top:888px;width:4px;height:1.15px;background:#000;"></div>
<div style="left:493.85px;top:888px;width:1.15px;height:4px;background:#000;"></div>
<div style="left:400.0px;top:906.85px;width:4px;height:1.15px;background:#000;"></div>
<div style="left:400.0px;top:904px;width:1.15px;height:4px;background:#000;"></div>
<div style="left:491.0px;top:906.85px;width:4px;height:1.15px;background:#000;"></div>
<div style="left:493.85px;top:904px;width:1.15px;height:4px;background:#000;"></div>
<div class="blue" style="left:498.5px;top:861px;width:93px;height:23px;font-size:10px;line-height:28px;padding-left:2px;letter-spacing:-0.078px;">Portes</div>
<div style="left:497.5px;top:861px;width:4px;height:1.15px;background:#000;"></div>
<div style="left:497.5px;top:861px;width:1.15px;height:4px;background:#000;"></div>
<div style="left:588.5px;top:861px;width:4px;height:1.15px;background:#000;"></div>
<div style="left:591.35px;top:861px;width:1.15px;height:4px;background:#000;"></div>
<div style="left:497.5px;top:884.5500000000001px;width:4px;height:1.15px;background:#000;"></div>
<div style="left:497.5px;top:881.7px;width:1.15px;height:4px;background:#000;"></div>
<div style="left:588.5px;top:884.5500000000001px;width:4px;height:1.15px;background:#000;"></div>
<div style="left:591.35px;top:881.7px;width:1.15px;height:4px;background:#000;"></div>
<div style="left:498.5px;top:889px;width:93px;height:19px;overflow:hidden;"><div class="t" style="left:0;top:0.5px;width:92px;text-align:right;font-size:11.5px;font-weight:bold;line-height:14px;color:#222;white-space:normal;word-break:break-all;">[FACTURAS."P<br>ORTES"]</div></div>
<div style="left:497.5px;top:888px;width:4px;height:1.15px;background:#000;"></div>
<div style="left:497.5px;top:888px;width:1.15px;height:4px;background:#000;"></div>
<div style="left:588.5px;top:888px;width:4px;height:1.15px;background:#000;"></div>
<div style="left:591.35px;top:888px;width:1.15px;height:4px;background:#000;"></div>
<div style="left:497.5px;top:906.85px;width:4px;height:1.15px;background:#000;"></div>
<div style="left:497.5px;top:904px;width:1.15px;height:4px;background:#000;"></div>
<div style="left:588.5px;top:906.85px;width:4px;height:1.15px;background:#000;"></div>
<div style="left:591.35px;top:904px;width:1.15px;height:4px;background:#000;"></div>
<div class="blue" style="left:596.0px;top:861px;width:93px;height:23px;font-size:10px;line-height:28px;padding-left:2px;letter-spacing:-0.085px;">Gastos</div>
<div style="left:595.0px;top:861px;width:4px;height:1.15px;background:#000;"></div>
<div style="left:595.0px;top:861px;width:1.15px;height:4px;background:#000;"></div>
<div style="left:686.0px;top:861px;width:4px;height:1.15px;background:#000;"></div>
<div style="left:688.85px;top:861px;width:1.15px;height:4px;background:#000;"></div>
<div style="left:595.0px;top:884.5500000000001px;width:4px;height:1.15px;background:#000;"></div>
<div style="left:595.0px;top:881.7px;width:1.15px;height:4px;background:#000;"></div>
<div style="left:686.0px;top:884.5500000000001px;width:4px;height:1.15px;background:#000;"></div>
<div style="left:688.85px;top:881.7px;width:1.15px;height:4px;background:#000;"></div>
<div style="left:596.0px;top:889px;width:93px;height:19px;overflow:hidden;"><div class="t" style="left:0;top:0.5px;width:92px;text-align:right;font-size:11.5px;font-weight:bold;line-height:14px;color:#222;white-space:normal;word-break:break-all;">[FACTURAS."G<br>ASTOS"]</div></div>
<div style="left:595.0px;top:888px;width:4px;height:1.15px;background:#000;"></div>
<div style="left:595.0px;top:888px;width:1.15px;height:4px;background:#000;"></div>
<div style="left:686.0px;top:888px;width:4px;height:1.15px;background:#000;"></div>
<div style="left:688.85px;top:888px;width:1.15px;height:4px;background:#000;"></div>
<div style="left:595.0px;top:906.85px;width:4px;height:1.15px;background:#000;"></div>
<div style="left:595.0px;top:904px;width:1.15px;height:4px;background:#000;"></div>
<div style="left:686.0px;top:906.85px;width:4px;height:1.15px;background:#000;"></div>
<div style="left:688.85px;top:904px;width:1.15px;height:4px;background:#000;"></div>
<div class="blue" style="left:693.5px;top:861px;width:93px;height:23px;font-size:10px;line-height:28px;padding-left:2px;letter-spacing:-0.070px;">Cuota de I.V.A.</div>
<div style="left:692.5px;top:861px;width:4px;height:1.15px;background:#000;"></div>
<div style="left:692.5px;top:861px;width:1.15px;height:4px;background:#000;"></div>
<div style="left:783.5px;top:861px;width:4px;height:1.15px;background:#000;"></div>
<div style="left:786.35px;top:861px;width:1.15px;height:4px;background:#000;"></div>
<div style="left:692.5px;top:884.5500000000001px;width:4px;height:1.15px;background:#000;"></div>
<div style="left:692.5px;top:881.7px;width:1.15px;height:4px;background:#000;"></div>
<div style="left:783.5px;top:884.5500000000001px;width:4px;height:1.15px;background:#000;"></div>
<div style="left:786.35px;top:881.7px;width:1.15px;height:4px;background:#000;"></div>
<div style="left:693.5px;top:889px;width:93px;height:19px;overflow:hidden;"><div class="t" style="left:0;top:0.5px;width:92px;text-align:right;font-size:11.5px;font-weight:bold;line-height:14px;color:#222;white-space:normal;word-break:break-all;">[FACTURAS."IV<br>A"]</div></div>
<div style="left:692.5px;top:888px;width:4px;height:1.15px;background:#000;"></div>
<div style="left:692.5px;top:888px;width:1.15px;height:4px;background:#000;"></div>
<div style="left:783.5px;top:888px;width:4px;height:1.15px;background:#000;"></div>
<div style="left:786.35px;top:888px;width:1.15px;height:4px;background:#000;"></div>
<div style="left:692.5px;top:906.85px;width:4px;height:1.15px;background:#000;"></div>
<div style="left:692.5px;top:904px;width:1.15px;height:4px;background:#000;"></div>
<div style="left:783.5px;top:906.85px;width:4px;height:1.15px;background:#000;"></div>
<div style="left:786.35px;top:904px;width:1.15px;height:4px;background:#000;"></div>
<div class="blue" style="left:791.0px;top:861px;width:93px;height:23px;font-size:10px;line-height:28px;padding-left:2px;letter-spacing:-0.076px;">Cuota R.E.</div>
<div style="left:790.0px;top:861px;width:4px;height:1.15px;background:#000;"></div>
<div style="left:790.0px;top:861px;width:1.15px;height:4px;background:#000;"></div>
<div style="left:881.0px;top:861px;width:4px;height:1.15px;background:#000;"></div>
<div style="left:883.85px;top:861px;width:1.15px;height:4px;background:#000;"></div>
<div style="left:790.0px;top:884.5500000000001px;width:4px;height:1.15px;background:#000;"></div>
<div style="left:790.0px;top:881.7px;width:1.15px;height:4px;background:#000;"></div>
<div style="left:881.0px;top:884.5500000000001px;width:4px;height:1.15px;background:#000;"></div>
<div style="left:883.85px;top:881.7px;width:1.15px;height:4px;background:#000;"></div>
<div style="left:791.0px;top:889px;width:93px;height:19px;overflow:hidden;"><div class="t" style="left:0;top:0.5px;width:92px;text-align:right;font-size:11.5px;font-weight:bold;line-height:14px;color:#222;white-space:normal;word-break:break-all;">[FACTURAS."R<br>ECARGO"]</div></div>
<div style="left:790.0px;top:888px;width:4px;height:1.15px;background:#000;"></div>
<div style="left:790.0px;top:888px;width:1.15px;height:4px;background:#000;"></div>
<div style="left:881.0px;top:888px;width:4px;height:1.15px;background:#000;"></div>
<div style="left:883.85px;top:888px;width:1.15px;height:4px;background:#000;"></div>
<div style="left:790.0px;top:906.85px;width:4px;height:1.15px;background:#000;"></div>
<div style="left:790.0px;top:904px;width:1.15px;height:4px;background:#000;"></div>
<div style="left:881.0px;top:906.85px;width:4px;height:1.15px;background:#000;"></div>
<div style="left:883.85px;top:904px;width:1.15px;height:4px;background:#000;"></div>
<div class="blue" style="left:888.5px;top:861px;width:93px;height:23px;font-size:10px;line-height:28px;padding-left:2px;letter-spacing:-0.081px;">Retención</div>
<div style="left:887.5px;top:861px;width:4px;height:1.15px;background:#000;"></div>
<div style="left:887.5px;top:861px;width:1.15px;height:4px;background:#000;"></div>
<div style="left:978.5px;top:861px;width:4px;height:1.15px;background:#000;"></div>
<div style="left:981.35px;top:861px;width:1.15px;height:4px;background:#000;"></div>
<div style="left:887.5px;top:884.5500000000001px;width:4px;height:1.15px;background:#000;"></div>
<div style="left:887.5px;top:881.7px;width:1.15px;height:4px;background:#000;"></div>
<div style="left:978.5px;top:884.5500000000001px;width:4px;height:1.15px;background:#000;"></div>
<div style="left:981.35px;top:881.7px;width:1.15px;height:4px;background:#000;"></div>
<div style="left:888.5px;top:889px;width:93px;height:19px;overflow:hidden;"><div class="t" style="left:0;top:0.5px;width:92px;text-align:right;font-size:11.5px;font-weight:bold;line-height:14px;color:#222;white-space:normal;word-break:break-all;">[FACTURAS."R<br>ETENCION"]</div></div>
<div style="left:887.5px;top:888px;width:4px;height:1.15px;background:#000;"></div>
<div style="left:887.5px;top:888px;width:1.15px;height:4px;background:#000;"></div>
<div style="left:978.5px;top:888px;width:4px;height:1.15px;background:#000;"></div>
<div style="left:981.35px;top:888px;width:1.15px;height:4px;background:#000;"></div>
<div style="left:887.5px;top:906.85px;width:4px;height:1.15px;background:#000;"></div>
<div style="left:887.5px;top:904px;width:1.15px;height:4px;background:#000;"></div>
<div style="left:978.5px;top:906.85px;width:4px;height:1.15px;background:#000;"></div>
<div style="left:981.35px;top:904px;width:1.15px;height:4px;background:#000;"></div>
<div style="left:1036.5px;top:861px;width:29px;height:35px;background:#69a80e;"></div>
<div style="left:1036px;top:861px;width:5px;height:1.15px;background:#000;"></div>
<div style="left:1036px;top:861px;width:1.15px;height:5px;background:#000;"></div>
<div style="left:1036px;top:896.45px;width:5px;height:1.15px;background:#000;"></div>
<div style="left:1036px;top:892.6px;width:1.15px;height:5px;background:#000;"></div>
<div style="left:1036px;top:899.3px;width:5px;height:1.15px;background:#000;"></div>
<div style="left:1036px;top:899.3px;width:1.15px;height:5px;background:#000;"></div>
<div class="t" style="left:1044.6px;top:901.5px;font-size:17.5px;font-weight:bold;color:#111;">[FA</div>
<div style="left:870px;top:158px;width:1px;height:761px;background:#4fa6c8;"></div>
<div style="left:871px;top:158px;width:1px;height:761px;background:#c8f6fc;opacity:0.85;"></div>
<div style="left:4px;top:99px;width:23.5px;height:22px;background:#cce4f7;border:1px solid #a6cdf0;"></div>
<svg style="left:8.0px;top:102.0px" width="16" height="16" viewBox="0 0 16 16"><path d="M3 1 L3 13.5 L6 10.8 L8.2 15.5 L10.3 14.5 L8.2 10 L12 10 Z" fill="#111" stroke="#111" stroke-width=".5" stroke-linejoin="round"/></svg>
<svg style="left:7.0px;top:125.5px" width="16" height="16" viewBox="0 0 16 16"><g transform="translate(-1.6,-1.2) scale(1.2)"><path d="M4 9 L2 6.5 Q1 5 2.5 4.8 L4.5 6.5 L4 3 Q4.5 1.5 5.8 2.5 L6.6 5.5 L6.8 1.8 Q7.8 0.5 8.6 1.8 L9 5.5 L10 2.5 Q11 1.5 11.6 3 L11.4 6.5 L12.8 4.6 Q14 4.2 13.8 5.6 L12.6 10 Q12 13.5 9.5 14.5 L6.5 14.5 Q4.5 13 4 9 Z" fill="#fff" stroke="#333" stroke-width=".8"/></g></svg>
<svg style="left:7.0px;top:148.0px" width="16" height="16" viewBox="0 0 16 16"><circle cx="6.5" cy="6.5" r="5" fill="#dcebf9" stroke="#8a96a8" stroke-width="1.4"/><circle cx="5.5" cy="5.3" r="2.2" fill="#fff" fill-opacity=".8"/><path d="M10.2 10.2 L14.5 14.5" stroke="#d9a23a" stroke-width="2.6" stroke-linecap="round"/></svg>
<div class="t" style="left:9.5px;top:170px;font-family:'Liberation Serif',serif;font-weight:bold;font-size:15px;color:#1f3f6e;">T</div>
<div style="left:19px;top:176px;width:1px;height:10px;background:#222;"></div>
<div style="left:17.5px;top:176px;width:4px;height:1px;background:#222;"></div>
<div style="left:17.5px;top:185px;width:4px;height:1px;background:#222;"></div>
<svg style="left:6.5px;top:193.5px" width="17" height="16" viewBox="0 0 17 16"><rect x="0.5" y="6" width="5" height="3.4" fill="#cfd8e6" stroke="#6a7a94" stroke-width=".8"/><path d="M6 7.7 L9.5 7.7" stroke="#222" stroke-width="1.2"/><path d="M9 5.8 L11.2 7.7 L9 9.6 Z" fill="#222"/><g fill="#fff" stroke="#8a9ab4" stroke-width=".9"><rect x="11" y="1" width="5.5" height="3.2"/><rect x="11" y="6" width="5.5" height="3.2"/><rect x="11" y="11.4" width="5.5" height="3.2"/></g></svg>
<svg style="left:7.0px;top:217.5px" width="16" height="16" viewBox="0 0 16 16"><rect x="1.5" y="1" width="13" height="14" fill="#fff" stroke="#555"/><text x="8" y="9" text-anchor="middle" font-family="Liberation Serif" font-size="8" fill="#3a5a9a" text-decoration="underline">A</text><path d="M4 9.5 L12 9.5 M4 12 L12 12" stroke="#555" stroke-width=".9"/></svg>
<svg style="left:7.0px;top:240.0px" width="16" height="16" viewBox="0 0 16 16"><rect x="1.5" y="1.5" width="13" height="13" fill="#e6ecf6" stroke="#5a6a86"/><path d="M4 8 L7 11.5 L12.5 4" fill="none" stroke="#4a6eb4" stroke-width="2.2"/></svg>
<svg style="left:7.0px;top:263.0px" width="16" height="16" viewBox="0 0 16 16"><rect x="1" y="8" width="4.5" height="7" fill="#f2c43a" stroke="#b8922a" stroke-width=".6"/><rect x="5.7" y="2" width="4.8" height="13" fill="#4a84d8" stroke="#2f5fa8" stroke-width=".6"/><rect x="10.7" y="9.5" width="4.5" height="5.5" fill="#5ab04a" stroke="#3a8030" stroke-width=".6"/></svg>
<svg style="left:7.0px;top:286.5px" width="16" height="16" viewBox="0 0 16 16"><defs><linearGradient id="gr" x1="0" y1="0" x2="0" y2="1"><stop offset="0" stop-color="#ffffff"/><stop offset=".45" stop-color="#e4ecf6"/><stop offset=".55" stop-color="#9ab4d8"/><stop offset="1" stop-color="#5a84c4"/></linearGradient></defs><rect x="1.5" y="3" width="13" height="10" fill="url(#gr)" stroke="#8a9ab4" stroke-width=".8"/></svg>
<div class="t" style="left:10px;top:310.5px;font-family:'Liberation Serif',serif;font-weight:bold;font-size:15.5px;color:#cc6a6a;">A</div>
<svg style="left:7.0px;top:332.0px" width="16" height="16" viewBox="0 0 16 16"><rect x="1" y="1" width="14" height="14" fill="#eef2f7" stroke="#7a8aa0"/><rect x="2.5" y="2.5" width="11" height="11" fill="#bcd8ee"/><circle cx="8" cy="7" r="3.6" fill="#4f9e4a"/><rect x="2.5" y="10.5" width="11" height="3" fill="#8ab86a"/><rect x="7.2" y="9" width="1.6" height="3.5" fill="#8a5a2a"/></svg>
<svg style="left:7.0px;top:355.5px" width="16" height="16" viewBox="0 0 16 16"><rect x="1" y="1" width="10.5" height="12" fill="#fdfdfd" stroke="#7a8aa6"/><rect x="7" y="8" width="8.5" height="7.5" fill="#f6e29a" stroke="#a08a3a"/><path d="M8.5 10.5 L14 10.5 M8.5 12.8 L14 12.8" stroke="#8a7a3a" stroke-width=".8"/></svg>
<div class="t" style="left:10px;top:378.5px;font-family:'Liberation Serif',serif;font-weight:bold;font-size:15px;color:#222;">Σ</div>
<svg style="left:7.0px;top:401.0px" width="16" height="16" viewBox="0 0 16 16"><rect x="1" y="1.5" width="14" height="13" fill="#eef2f8" stroke="#5a6a86"/><rect x="2.5" y="3" width="3" height="3" fill="#fff" stroke="#5a6a86" stroke-width=".7"/><rect x="7" y="3" width="6.5" height="3" fill="#fff" stroke="#5a6a86" stroke-width=".7"/><rect x="2.5" y="8" width="3" height="5" fill="#fff" stroke="#5a6a86" stroke-width=".7"/><path d="M8 11.5 L11 11.5 L11 8.5" fill="none" stroke="#4a74b8" stroke-width="1.2"/></svg>
<svg style="left:7.0px;top:424.0px" width="16" height="16" viewBox="0 0 16 16"><rect x="1" y="1.5" width="14" height="13" fill="#eef2f8" stroke="#5a6a86"/><rect x="2.5" y="3" width="3" height="3" fill="#fff" stroke="#5a6a86" stroke-width=".7"/><rect x="7" y="3" width="6.5" height="3" fill="#fff" stroke="#5a6a86" stroke-width=".7"/><rect x="2.5" y="8" width="3" height="5" fill="#fff" stroke="#5a6a86" stroke-width=".7"/><path d="M9 9.5 L9 14 Q11.8 15.6 14.6 14 L14.6 9.5 Z" fill="#f0c03a" stroke="#a8822a" stroke-width=".7"/><ellipse cx="11.8" cy="9.5" rx="2.8" ry="1.2" fill="#fbe08a" stroke="#a8822a" stroke-width=".7"/></svg>
<div class="t" style="left:9.5px;top:447.5px;font-family:'Liberation Serif',serif;font-weight:bold;font-size:16px;color:#cc6060;">A</div>
<svg style="left:7.0px;top:470.5px" width="16" height="16" viewBox="0 0 16 16"><rect x="1" y="1.5" width="14" height="13" fill="#eef2f8" stroke="#5a6a86"/><rect x="2.5" y="3" width="3" height="3" fill="#fff" stroke="#5a6a86" stroke-width=".7"/><rect x="7" y="3" width="6.5" height="3" fill="#fff" stroke="#5a6a86" stroke-width=".7"/><rect x="2.5" y="8" width="3" height="5" fill="#fff" stroke="#5a6a86" stroke-width=".7"/><text x="11.5" y="14.5" text-anchor="middle" font-family="Liberation Sans" font-weight="bold" font-size="5.8" fill="#e01818" stroke="#e01818" stroke-width=".4">FIB</text></svg>
<svg style="left:7.0px;top:494.0px" width="16" height="16" viewBox="0 0 16 16"><rect x="2" y="6" width="3.6" height="9" fill="#4a84d8" stroke="#2f5fa8" stroke-width=".6"/><rect x="6.2" y="2" width="3.6" height="13" fill="#d85a4a" stroke="#a83a2f" stroke-width=".6"/><rect x="10.4" y="4.5" width="3.6" height="10.5" fill="#5ab04a" stroke="#3a8030" stroke-width=".6"/><text x="11.5" y="15.5" text-anchor="middle" font-family="Liberation Sans" font-weight="bold" font-size="5.8" fill="#e01818" stroke="#e01818" stroke-width=".4">FIB</text><path d="M1.5 1 L1.5 15.5" stroke="#555"/></svg>
<svg style="left:7.0px;top:517.0px" width="16" height="16" viewBox="0 0 16 16"><rect x="1" y="3.5" width="6" height="5.5" rx="1" fill="#a8a8a8" stroke="#7a7a7a" stroke-width=".7"/><circle cx="11.5" cy="3.5" r="2.6" fill="#7cc46a" stroke="#4a9a3a" stroke-width=".7"/><path d="M8.5 8.5 L14.5 15 L2.5 15 Z" fill="#f6d05a" stroke="#c8a02a" stroke-width=".7"/></svg>
<svg style="left:7.0px;top:539.5px" width="16" height="16" viewBox="0 0 16 16"><g fill="#333"><rect x="1" y="2" width="1.4" height="9"/><rect x="3.4" y="2" width="1" height="9"/><rect x="5.2" y="2" width="1.8" height="9"/><rect x="8" y="2" width="1" height="9"/><rect x="9.8" y="2" width="1.4" height="9"/><rect x="12" y="2" width="1" height="9"/><rect x="13.8" y="2" width="1.4" height="9"/><rect x="1" y="12" width="1.4" height="2.4"/><rect x="13.8" y="12" width="1.4" height="2.4"/><rect x="3.4" y="12.3" width="1" height="1.4"/><rect x="6" y="12.3" width="1" height="1.4"/><rect x="9" y="12.3" width="1" height="1.4"/><rect x="11.5" y="12.3" width="1" height="1.4"/></g></svg>
<svg style="left:0;top:0" width="1065" height="919" viewBox="0 0 1065 919"><g style="filter:blur(0.75px)"><rect x="2.4" y="305.6" width="28.1" height="26.6" rx="1.5" fill="#fff" fill-opacity=".25" stroke="#f40000" stroke-width="4.3"/><rect x="838.2" y="135.6" width="142.2" height="60.5" rx="2" fill="none" stroke="#f40000" stroke-width="4.3"/></g><g style="filter:blur(0.35px)"><path d="M29.9 325.5 L824.2 784.8 L825.8 782.2 L32.1 321.7 Z" fill="#f40000"/><path d="M849.4 796.7 L820.7 788.5 L828 775.7 Z" fill="#f40000"/><path d="M985 402 L985 405 L903 406.2 L903 402.4 Z" fill="#f40000"/><path d="M874.5 404.5 L904 396.7 L904 412.2 Z" fill="#f40000"/></g></svg>
<div class="t" style="left:896px;top:364px;font-size:23px;color:#e00000;-webkit-text-stroke:0.35px #e00000;transform-origin:0 0;transform:scaleX(0.82);">2)</div>
<div class="t" style="left:718.5px;top:733px;font-size:23px;color:#e00000;-webkit-text-stroke:0.35px #e00000;transform-origin:0 0;transform:scaleX(0.82);">1)</div>
</div></body></html>
